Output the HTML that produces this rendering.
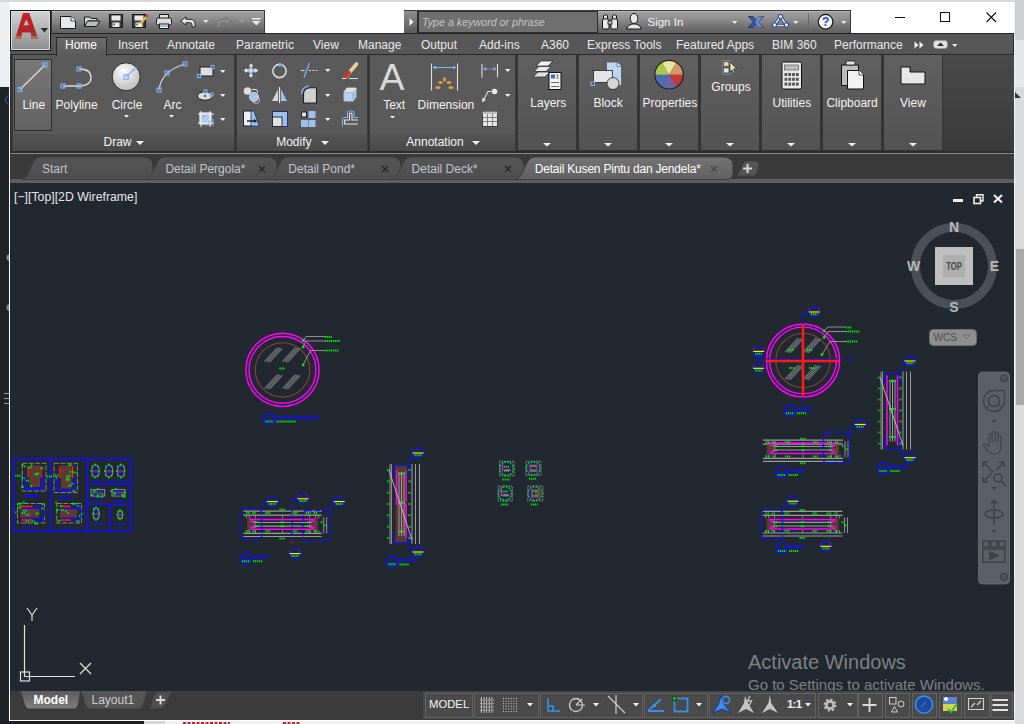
<!DOCTYPE html><html><head><meta charset='utf-8'><style>
*{margin:0;padding:0;box-sizing:border-box}
html,body{width:1024px;height:724px;overflow:hidden;background:#c9cacb;font-family:"Liberation Sans",sans-serif;position:relative}
.a{position:absolute}
.t{position:absolute;white-space:nowrap;line-height:1}
</style></head><body><div class="a" style="left:0px;top:0px;width:1024px;height:724px;background:#cbcccd"></div><div class="a" style="left:0px;top:0px;width:1024px;height:2px;background:#d8d9da"></div><div class="a" style="left:0px;top:2px;width:9px;height:85px;background:#eceef0"></div><div class="a" style="left:0px;top:87px;width:9px;height:637px;background:#1f2327"></div><div class="a" style="left:1015px;top:0px;width:9px;height:724px;background:#cdcecf"></div><div class="a" style="left:9px;top:2px;width:1006px;height:719px;background:#ffffff"></div><div class="a" style="left:51px;top:10px;width:214px;height:24px;background:linear-gradient(#b6b6b6 0,#b6b6b6 1px,#a0a0a0 1px,#8e8e8e 35%,#747474 65%,#5c5c5c 100%);border:1px solid #3a3a3a;border-bottom:none"></div><div class="a" style="left:404px;top:10px;width:447px;height:24px;background:linear-gradient(#b6b6b6 0,#b6b6b6 1px,#a0a0a0 1px,#8e8e8e 35%,#747474 65%,#5c5c5c 100%);border:1px solid #3a3a3a;border-bottom:none"></div><svg class="a" style="left:60px;top:16px;overflow:visible;" width="17" height="14" viewBox="0 0 17 14"><path d="M0.5,0.5 H11 L15.5,5 V12.5 H0.5 Z" fill="#e6e7e8" stroke="#1a1a1a"/><path d="M11,0.5 V5 H15.5" fill="#fff" stroke="#1a1a1a" stroke-width="0.8"/></svg><svg class="a" style="left:84px;top:16px;overflow:visible;" width="17" height="12" viewBox="0 0 17 12"><path d="M0.5,1 H6 L7,2.5 H13 V5 H4 L0.5,10.5 Z" fill="#d8d9da" stroke="#1a1a1a"/><path d="M3.5,5 H16 L12.5,10.5 H0.5 Z" fill="#b9bcbd" stroke="#1a1a1a"/></svg><svg class="a" style="left:109px;top:14px;overflow:visible;" width="15" height="14" viewBox="0 0 15 14"><rect x="0.5" y="0.5" width="13" height="13" fill="#3a3a3a" stroke="#1a1a1a"/><rect x="2.5" y="1.5" width="9" height="5" fill="#e8e8e8"/><rect x="3.5" y="8.5" width="7" height="4.5" fill="#f0f0f0"/><rect x="4.5" y="9.5" width="1.2" height="2" fill="#222"/></svg><svg class="a" style="left:132px;top:14px;overflow:visible;" width="17" height="14" viewBox="0 0 17 14"><rect x="0.5" y="0.5" width="13" height="13" fill="#3a3a3a" stroke="#1a1a1a"/><rect x="2.5" y="1.5" width="9" height="5" fill="#e8e8e8"/><rect x="3.5" y="8.5" width="7" height="4.5" fill="#f0f0f0"/><rect x="4.5" y="9.5" width="1.2" height="2" fill="#222"/><path d="M8,10 L15,2" stroke="#e8c040" stroke-width="2.5"/><path d="M14,3 L16,1" stroke="#d04030" stroke-width="2.5"/></svg><svg class="a" style="left:156px;top:14px;overflow:visible;" width="16" height="15" viewBox="0 0 16 15"><rect x="3.5" y="0.5" width="9" height="4" fill="#e0e0e0" stroke="#1a1a1a"/><rect x="0.5" y="4" width="15" height="7" rx="1.5" fill="#dcdcdc" stroke="#1a1a1a"/><rect x="3.5" y="10" width="9" height="4.5" fill="#f0f0f0" stroke="#1a1a1a"/><rect x="4" y="11.5" width="8" height="1.2" fill="#6aa8e8"/></svg><svg class="a" style="left:180px;top:16px;overflow:visible;" width="16" height="12" viewBox="0 0 16 12"><path d="M0.8,5 L6,0.8 V3.3 H10 Q15,3.3 15,8 V11 H12 V8.5 Q12,6.7 10,6.7 H6 V9.2 Z" fill="#e4e4e4" stroke="#1a1a1a" stroke-width="0.9"/></svg><svg class="a" style="left:203px;top:20px" width="5.5" height="3"><polygon points="0,0 5.5,0 2.75,3" fill="#e8e8e8"/></svg><svg class="a" style="left:217px;top:16px;overflow:visible;" width="15" height="12" viewBox="0 0 15 12"><path d="M14.2,5 L9,0.8 V3.3 H5 Q0,3.3 0,8 V11 H3 V8.5 Q3,6.7 5,6.7 H9 V9.2 Z" fill="#8e8e8e" stroke="#707070" stroke-width="0.9"/></svg><svg class="a" style="left:239px;top:20px" width="5.5" height="3"><polygon points="0,0 5.5,0 2.75,3" fill="#a0a0a0"/></svg><svg class="a" style="left:252px;top:18px;overflow:visible;" width="9" height="8" viewBox="0 0 9 8"><rect x="0" y="0" width="8.5" height="1.6" fill="#e8e8e8"/><polygon points="0,3 8.5,3 4.25,7.5" fill="#e8e8e8"/></svg><div class="a" style="left:404px;top:11px;width:14px;height:22px;background:linear-gradient(#8e8e8e,#5a5a5a);border-right:1px solid #2a2a2a"></div><svg class="a" style="left:409px;top:18px;overflow:visible;" width="5" height="8" viewBox="0 0 5 8"><polygon points="0.5,0 4.5,4 0.5,8" fill="#f4f4f4"/></svg><div class="a" style="left:418px;top:11px;width:180px;height:22px;background:#6f6f6f;border:1px solid #2e2e2e"></div><div class="t" style="left:422px;top:16.94px;font-size:10.7px;color:#c4c4c4;font-weight:400;font-style:italic;">Type a keyword or phrase</div><svg class="a" style="left:602px;top:14px;overflow:visible;" width="17" height="16" viewBox="0 0 17 16"><rect x="1.5" y="1" width="4" height="5" rx="1" fill="#dcdcdc" stroke="#151515"/><rect x="10.5" y="1" width="4" height="5" rx="1" fill="#dcdcdc" stroke="#151515"/><rect x="0.5" y="5" width="6.5" height="10" rx="1" fill="#e8e8e8" stroke="#151515"/><rect x="9" y="5" width="6.5" height="10" rx="1" fill="#e8e8e8" stroke="#151515"/><rect x="6" y="7" width="4" height="3" fill="#cfcfcf" stroke="#151515" stroke-width="0.8"/></svg><svg class="a" style="left:626px;top:13px;overflow:visible;" width="17" height="17" viewBox="0 0 17 17"><ellipse cx="8" cy="5.5" rx="3.8" ry="5" fill="#e6e6e6" stroke="#151515"/><path d="M0.5,16 Q2,11.5 6,11 H10 Q14,11.5 15.5,16 Z" fill="#e6e6e6" stroke="#151515"/></svg><div class="t" style="left:647.5px;top:16.77px;font-size:11.5px;color:#f4f4f4;font-weight:400;font-style:normal;">Sign In</div><svg class="a" style="left:732px;top:21px" width="5.5" height="3"><polygon points="0,0 5.5,0 2.75,3" fill="#e8e8e8"/></svg><svg class="a" style="left:748px;top:16px;overflow:visible;" width="16" height="12" viewBox="0 0 16 12"><path d="M0.5,0.5 H5 L8,4 L11,0.5 H15.5 L10.5,6 L15.5,11.5 H11 L8,8 L5,11.5 H0.5 L5.5,6 Z" fill="#3c5ca8" stroke="#1c2c60" stroke-width="0.8"/><path d="M8,4 L11,0.5 H15 L10.5,6 L15,11.5 H11 L8,8" fill="#6c8ad0"/></svg><svg class="a" style="left:772px;top:14px;overflow:visible;" width="17" height="14" viewBox="0 0 17 14"><path d="M8.5,2 L2.5,11.5 H14.5 Z" fill="none" stroke="#223a80" stroke-width="3.2" stroke-linejoin="round"/><path d="M8.5,2 L2.5,11.5 H14.5 Z" fill="none" stroke="#dfe4f0" stroke-width="1.5" stroke-linejoin="round"/><circle cx="8.5" cy="2.6" r="2.2" fill="#dfe4f0" stroke="#223a80"/><circle cx="2.6" cy="11" r="2.2" fill="#dfe4f0" stroke="#223a80"/><circle cx="14.4" cy="11" r="2.2" fill="#dfe4f0" stroke="#223a80"/></svg><svg class="a" style="left:793px;top:21px" width="5.5" height="3"><polygon points="0,0 5.5,0 2.75,3" fill="#e8e8e8"/></svg><div class="a" style="left:808px;top:13px;width:1px;height:18px;background:#6a6a6a"></div><svg class="a" style="left:817px;top:14px;overflow:visible;" width="18" height="17" viewBox="0 0 18 17"><circle cx="8.6" cy="7.7" r="7.3" fill="#f2f2f2" stroke="#111" stroke-width="1.1"/><text x="8.6" y="12.2" font-family="Liberation Sans" font-weight="700" font-size="12.5" fill="#1f4fb8" text-anchor="middle">?</text></svg><svg class="a" style="left:841px;top:21px" width="5.5" height="3"><polygon points="0,0 5.5,0 2.75,3" fill="#e8e8e8"/></svg><div class="a" style="left:895px;top:17px;width:10px;height:1px;background:#111"></div><div class="a" style="left:940px;top:12px;width:10px;height:10px;border:1px solid #111"></div><svg class="a" style="left:986px;top:12px;overflow:visible;" width="11" height="11" viewBox="0 0 11 11"><path d="M0.5,0.5 L10,10 M10,0.5 L0.5,10" stroke="#111" stroke-width="1.1"/></svg><div class="a" style="left:10px;top:33px;width:1004px;height:22px;background:#575757;border-top:1px solid #252525;border-bottom:1px solid #2a2a2a;border-right:1px solid #2a2a2a"></div><div class="t" style="left:118px;top:38.84px;font-size:12px;color:#e8e8e8;font-weight:400;font-style:normal;">Insert</div><div class="t" style="left:167px;top:38.84px;font-size:12px;color:#e8e8e8;font-weight:400;font-style:normal;">Annotate</div><div class="t" style="left:236px;top:38.84px;font-size:12px;color:#e8e8e8;font-weight:400;font-style:normal;">Parametric</div><div class="t" style="left:313px;top:38.84px;font-size:12px;color:#e8e8e8;font-weight:400;font-style:normal;">View</div><div class="t" style="left:358px;top:38.84px;font-size:12px;color:#e8e8e8;font-weight:400;font-style:normal;">Manage</div><div class="t" style="left:421px;top:38.84px;font-size:12px;color:#e8e8e8;font-weight:400;font-style:normal;">Output</div><div class="t" style="left:479px;top:38.84px;font-size:12px;color:#e8e8e8;font-weight:400;font-style:normal;">Add-ins</div><div class="t" style="left:541px;top:38.84px;font-size:12px;color:#e8e8e8;font-weight:400;font-style:normal;">A360</div><div class="t" style="left:587px;top:38.84px;font-size:12px;color:#e8e8e8;font-weight:400;font-style:normal;">Express Tools</div><div class="t" style="left:676px;top:38.84px;font-size:12px;color:#e8e8e8;font-weight:400;font-style:normal;">Featured Apps</div><div class="t" style="left:772px;top:38.84px;font-size:12px;color:#e8e8e8;font-weight:400;font-style:normal;">BIM 360</div><div class="t" style="left:834px;top:38.84px;font-size:12px;color:#e8e8e8;font-weight:400;font-style:normal;">Performance</div><svg class="a" style="left:914px;top:41px;overflow:visible;" width="10" height="8" viewBox="0 0 10 8"><polygon points="0.5,0.5 4.5,4 0.5,7.5" fill="#f0f0f0"/><polygon points="5.5,0.5 9.5,4 5.5,7.5" fill="#f0f0f0"/></svg><svg class="a" style="left:933px;top:40px;overflow:visible;" width="15" height="9" viewBox="0 0 15 9"><rect x="0.5" y="0.5" width="14" height="8" rx="3" fill="#e0e0e0" stroke="#999" stroke-width="0.6"/><polygon points="4,6 11,6 7.5,2.5" fill="#2a2a2a"/></svg><svg class="a" style="left:952px;top:44px" width="5.5" height="3"><polygon points="0,0 5.5,0 2.75,3" fill="#e8e8e8"/></svg><div class="a" style="left:10px;top:55px;width:1004px;height:98px;background:#333333"></div><div class="a" style="left:12px;top:55px;width:223px;height:97px;background:#5a5a5a;border:1px solid #3c3c3c;border-top:none"></div><div class="a" style="left:13px;top:134px;width:221px;height:17px;background:linear-gradient(#545454,#4a4a4a)"></div><div class="a" style="left:56px;top:37px;width:51px;height:19px;background:linear-gradient(#6c6c6c,#5a5a5a);border:1px solid #2a2a2a;border-bottom:none"></div><div class="t" style="left:65px;top:38.84px;font-size:12px;color:#ffffff;font-weight:400;font-style:normal;">Home</div><div class="a" style="left:236px;top:55px;width:132px;height:97px;background:#5a5a5a;border:1px solid #3c3c3c;border-top:none"></div><div class="a" style="left:237px;top:134px;width:130px;height:17px;background:linear-gradient(#545454,#4a4a4a)"></div><div class="a" style="left:369px;top:55px;width:147px;height:97px;background:#5a5a5a;border:1px solid #3c3c3c;border-top:none"></div><div class="a" style="left:370px;top:134px;width:145px;height:17px;background:linear-gradient(#545454,#4a4a4a)"></div><div class="a" style="left:517px;top:55px;width:60px;height:96px;background:linear-gradient(#606060,#535353);border:1px solid #353535;border-top:none"></div><div class="a" style="left:578px;top:55px;width:60px;height:96px;background:linear-gradient(#606060,#535353);border:1px solid #353535;border-top:none"></div><div class="a" style="left:639px;top:55px;width:60px;height:96px;background:linear-gradient(#606060,#535353);border:1px solid #353535;border-top:none"></div><div class="a" style="left:700px;top:55px;width:60px;height:96px;background:linear-gradient(#606060,#535353);border:1px solid #353535;border-top:none"></div><div class="a" style="left:761px;top:55px;width:60px;height:96px;background:linear-gradient(#606060,#535353);border:1px solid #353535;border-top:none"></div><div class="a" style="left:822px;top:55px;width:60px;height:96px;background:linear-gradient(#606060,#535353);border:1px solid #353535;border-top:none"></div><div class="a" style="left:883px;top:55px;width:60px;height:96px;background:linear-gradient(#606060,#535353);border:1px solid #353535;border-top:none"></div><div class="a" style="left:943px;top:55px;width:71px;height:96px;background:linear-gradient(#4a4a4a,#3a3a3a)"></div><div class="a" style="left:10px;top:151px;width:1004px;height:2px;background:#2c2c2c"></div><div class="a" style="left:10px;top:153px;width:1004px;height:1px;background:#8a8a8a"></div><div class="a" style="left:14px;top:59px;width:38px;height:72px;background:linear-gradient(#787878,#626262);border:1px solid #2e2e2e"></div><svg class="a" style="left:0px;top:0px;overflow:visible;" width="1" height="1" viewBox="0 0 1 1"><line x1="20" y1="89.5" x2="45" y2="65" stroke="#dcdcdc" stroke-width="1.3"/><rect x="18.0" y="87.5" width="4" height="4" fill="none" stroke="#7cb0f2" stroke-width="1.2"/><rect x="43.0" y="63.0" width="4" height="4" fill="none" stroke="#7cb0f2" stroke-width="1.2"/><path d="M63,86 H79 M79,69 Q91,69 91,77.5 Q91,86 79,86" fill="none" stroke="#dcdcdc" stroke-width="1.3"/><rect x="61.0" y="84.0" width="4" height="4" fill="none" stroke="#7cb0f2" stroke-width="1.2"/><rect x="77.0" y="84.0" width="4" height="4" fill="none" stroke="#7cb0f2" stroke-width="1.2"/><rect x="77.0" y="67.0" width="4" height="4" fill="none" stroke="#7cb0f2" stroke-width="1.2"/><defs><radialGradient id="cg" cx="0.4" cy="0.3" r="0.8"><stop offset="0" stop-color="#fbfbfb"/><stop offset="1" stop-color="#b4b4b4"/></radialGradient></defs><circle cx="126.2" cy="76.8" r="14" fill="url(#cg)" stroke="#2a2a2a" stroke-width="1"/><line x1="126" y1="77" x2="136.5" y2="67" stroke="#7cb0f2" stroke-width="1.2"/><rect x="123.95" y="74.75" width="4.5" height="4.5" fill="none" stroke="#7cb0f2" stroke-width="1.2"/><path d="M159,90 Q161,71 185,64" fill="none" stroke="#d0d0d0" stroke-width="1.3"/><rect x="157.0" y="88.0" width="4" height="4" fill="none" stroke="#7cb0f2" stroke-width="1.2"/><rect x="165.0" y="71.0" width="4" height="4" fill="none" stroke="#7cb0f2" stroke-width="1.2"/><rect x="183.0" y="62.0" width="4" height="4" fill="none" stroke="#7cb0f2" stroke-width="1.2"/><rect x="200" y="67" width="13" height="9" fill="#dedede" stroke="#1e1e1e"/><rect x="211.0" y="65.5" width="3" height="3" fill="none" stroke="#7cb0f2" stroke-width="1.2"/><rect x="197.5" y="74.5" width="3" height="3" fill="none" stroke="#7cb0f2" stroke-width="1.2"/><ellipse cx="205" cy="96" rx="7.5" ry="4.2" fill="#dcdcdc" stroke="#1e1e1e"/><circle cx="205" cy="96" r="0.9" fill="#111"/><rect x="204.0" y="90.0" width="3" height="3" fill="none" stroke="#7cb0f2" stroke-width="1.2"/><rect x="210.0" y="93.0" width="3" height="3" fill="none" stroke="#7cb0f2" stroke-width="1.2"/><rect x="200" y="113" width="11" height="11" fill="#a8c4ea" stroke="#f0f0f0" stroke-width="1.2"/><path d="M198,114 H214 M198,123 H214 M201,111 V127 M210,111 V127" stroke="#f0f0f0" stroke-width="1"/><path d="M202,122 L209,115 M204,124 L211,117" stroke="#e8e8e8" stroke-width="0.8"/><path d="M206,126 L213,119 L213,126" fill="none" stroke="#7cb0f2" stroke-width="1"/></svg><div class="t" style="left:22.4px;top:98.84px;font-size:12px;color:#f4f4f4;font-weight:400;font-style:normal;">Line</div><div class="t" style="left:55.6px;top:98.84px;font-size:12px;color:#f4f4f4;font-weight:400;font-style:normal;">Polyline</div><div class="t" style="left:111.7px;top:98.84px;font-size:12px;color:#f4f4f4;font-weight:400;font-style:normal;">Circle</div><div class="t" style="left:163.5px;top:98.84px;font-size:12px;color:#f4f4f4;font-weight:400;font-style:normal;">Arc</div><svg class="a" style="left:123.5px;top:115px" width="5" height="2.8"><polygon points="0,0 5,0 2.5,2.8" fill="#f0f0f0"/></svg><svg class="a" style="left:169px;top:115px" width="5" height="2.8"><polygon points="0,0 5,0 2.5,2.8" fill="#f0f0f0"/></svg><svg class="a" style="left:220px;top:70px" width="5.5" height="3"><polygon points="0,0 5.5,0 2.75,3" fill="#f0f0f0"/></svg><svg class="a" style="left:220px;top:94px" width="5.5" height="3"><polygon points="0,0 5.5,0 2.75,3" fill="#f0f0f0"/></svg><svg class="a" style="left:220px;top:118px" width="5.5" height="3"><polygon points="0,0 5.5,0 2.75,3" fill="#f0f0f0"/></svg><div class="t" style="left:103.5px;top:136.34px;font-size:12px;color:#f4f4f4;font-weight:400;font-style:normal;">Draw</div><svg class="a" style="left:136px;top:141px" width="8" height="4"><polygon points="0,0 8,0 4.0,4" fill="#f0f0f0"/></svg><svg class="a" style="left:0px;top:0px;overflow:visible;" width="1" height="1" viewBox="0 0 1 1"><path d="M251,63 L254,66.5 H252.2 V69 H255 V67.2 L258.5,70.5 L255,73.8 V72 H252.2 V74.8 H254 L251,78 L248,74.8 H249.8 V72 H247 V73.8 L243.5,70.5 L247,67.2 V69 H249.8 V66.5 H248 Z" fill="#e0e0e0" stroke="#333" stroke-width="0.4"/><rect x="249" y="68.5" width="4" height="4" fill="none" stroke="#7cb0f2" stroke-width="1"/><circle cx="279.5" cy="71" r="6.6" fill="none" stroke="#d8d8d8" stroke-width="1.6"/><polygon points="279,62.5 284,64.8 279,67" fill="#7cb0f2"/><path d="M301,70.5 H304.5 M309,70.5 H311 M312.5,70.5 H314.5 M316,70.5 H317.5" stroke="#dcdcdc" stroke-width="1.2"/><line x1="304" y1="77.5" x2="309.5" y2="63" stroke="#7cb0f2" stroke-width="1.3"/><path d="M346,76.5 L356.5,64" stroke="#e8d0a0" stroke-width="3.6" stroke-linecap="round"/><path d="M345,77 L349,72.5" stroke="#d03030" stroke-width="3.6" stroke-linecap="round"/><path d="M342,78.5 H346 M349,78.5 H358" stroke="#e0e0e0" stroke-width="1.2"/><circle cx="247.5" cy="91" r="3.8" fill="#dcdcdc"/><circle cx="254" cy="97" r="4.5" fill="#9cc0ec" stroke="#e8e8e8" stroke-width="0.8"/><circle cx="256" cy="100" r="3.5" fill="none" stroke="#cfcfcf" stroke-width="0.8"/><path d="M252,89.5 H256 Q257.5,89.5 257.5,91.5 V93" fill="none" stroke="#e0e0e0" stroke-width="1"/><path d="M279.5,87 V103" stroke="#e8e8e8" stroke-width="1.2"/><polygon points="278,89.5 278,101 272,101" fill="#d8d8d8"/><polygon points="281,89.5 281,101 287,101" fill="#9cc0ec"/><path d="M303.5,103 V94 Q303.5,88.5 310,87.8 H316.5 V103 Z" fill="#d0d0d0" stroke="#1e1e1e" stroke-width="1.1"/><path d="M301.5,94 Q302,87 309,86" fill="none" stroke="#7cb0f2" stroke-width="1.4"/><path d="M344,92 L347,88 H356 V97 L353,101 H344 Z" fill="#9cc0ec" stroke="#e0e0e0" stroke-width="0.8"/><path d="M347,88 H356 L353,92 H344 Z" fill="#e0e0e0"/><rect x="345" y="93" width="7" height="7" fill="#b8d2f2"/><rect x="243.5" y="111" width="8" height="15" fill="#f0f0f0" stroke="#1e1e1e"/><polygon points="251,111 254,111 259,126 251,126" fill="#9cc0ec" stroke="#1e2c60" stroke-width="0.8"/><path d="M247,121 H254.5" stroke="#111" stroke-width="1.4"/><polygon points="254,119 257,121 254,123" fill="#111"/><rect x="272.5" y="111.5" width="15" height="15" fill="#9cc0ec" stroke="#1e2c60" stroke-width="0.9"/><rect x="272.5" y="117" width="9.5" height="9.5" fill="#e2e2e2" stroke="#1e1e1e" stroke-width="0.9"/><rect x="301.5" y="112" width="5" height="5" fill="#e2e2e2" stroke="#1e1e1e"/><rect x="308.5" y="111" width="7" height="7" fill="#9cc0ec"/><rect x="301" y="120" width="7" height="7" fill="#9cc0ec"/><rect x="308.5" y="120" width="7" height="7" fill="#9cc0ec"/><path d="M342.5,126 V119 Q342.5,117.5 344,117.5 H347.5 V113 Q347.5,111 350,111 H352 Q354,111 354,113 V117.5 H358" fill="none" stroke="#7cb0f2" stroke-width="1.1"/><path d="M344.5,124 V120 H349.5 V114.5 Q349.5,113 350.5,113 H351 Q352,113 352,114.5 V120 H358 M344.5,124 H358" fill="none" stroke="#e8e8e8" stroke-width="1.1"/></svg><svg class="a" style="left:324.5px;top:69px" width="5.5" height="3"><polygon points="0,0 5.5,0 2.75,3" fill="#f0f0f0"/></svg><svg class="a" style="left:324.5px;top:94px" width="5.5" height="3"><polygon points="0,0 5.5,0 2.75,3" fill="#f0f0f0"/></svg><svg class="a" style="left:324.5px;top:118px" width="5.5" height="3"><polygon points="0,0 5.5,0 2.75,3" fill="#f0f0f0"/></svg><div class="t" style="left:276.2px;top:136.34px;font-size:12px;color:#f4f4f4;font-weight:400;font-style:normal;">Modify</div><svg class="a" style="left:320.5px;top:141px" width="8" height="4"><polygon points="0,0 8,0 4.0,4" fill="#f0f0f0"/></svg><div class="t" style="left:379.5px;top:59.46px;font-size:37.5px;color:#d8d8d8;font-weight:400;font-style:normal;">A</div><svg class="a" style="left:0px;top:0px;overflow:visible;" width="1" height="1" viewBox="0 0 1 1"><path d="M431.5,63.5 V90.5 M457.5,63.5 V90.5" stroke="#dcdcdc" stroke-width="1.1"/><path d="M433,67.5 H456" stroke="#7cb0f2" stroke-width="1.1"/><polygon points="432.5,67.5 436,65.5 436,69.5" fill="#7cb0f2"/><polygon points="456.5,67.5 453,65.5 453,69.5" fill="#7cb0f2"/><g fill="#e0a040"><ellipse cx="438" cy="87.5" rx="2.6" ry="1.5"/><ellipse cx="440.5" cy="82.5" rx="2.2" ry="1.6"/><ellipse cx="444.5" cy="79.5" rx="1.5" ry="2.3"/><ellipse cx="449" cy="82.5" rx="2.2" ry="1.6"/><ellipse cx="451" cy="87.5" rx="2.6" ry="1.5"/></g><path d="M482,64 V77.5 M497.5,64 V77.5" stroke="#e0e0e0" stroke-width="1.1"/><path d="M484,69 H495.5" stroke="#7cb0f2" stroke-width="1.1" stroke-dasharray="1.5,1"/><polygon points="483,69 486,67 486,71" fill="#7cb0f2"/><polygon points="496.5,69 493.5,67 493.5,71" fill="#7cb0f2"/><circle cx="494.5" cy="91.5" r="3.3" fill="#e8e8e8" stroke="#333" stroke-width="0.6"/><path d="M491,91.5 H488 L483,101" fill="none" stroke="#e0e0e0" stroke-width="1.1"/><polygon points="482,102.5 482.5,97.5 486,100" fill="#e0e0e0"/><rect x="482.5" y="111.5" width="15" height="15" fill="#e8e8e8" stroke="#222" stroke-width="0.8"/><rect x="482.5" y="111.5" width="15" height="2.5" fill="#bdbdbd"/><path d="M482.5,117.5 H497.5 M482.5,121.5 H497.5 M487.5,114 V126.5 M492.5,114 V126.5" stroke="#666" stroke-width="0.8"/></svg><div class="t" style="left:383.2px;top:98.54px;font-size:12px;color:#f4f4f4;font-weight:400;font-style:normal;">Text</div><svg class="a" style="left:390px;top:115.5px" width="5" height="2.8"><polygon points="0,0 5,0 2.5,2.8" fill="#f0f0f0"/></svg><div class="t" style="left:417.6px;top:98.54px;font-size:12px;color:#f4f4f4;font-weight:400;font-style:normal;">Dimension</div><svg class="a" style="left:505px;top:69px" width="5.5" height="3"><polygon points="0,0 5.5,0 2.75,3" fill="#f0f0f0"/></svg><svg class="a" style="left:505px;top:94px" width="5.5" height="3"><polygon points="0,0 5.5,0 2.75,3" fill="#f0f0f0"/></svg><div class="t" style="left:406.3px;top:136.34px;font-size:12px;color:#f4f4f4;font-weight:400;font-style:normal;">Annotation</div><svg class="a" style="left:472.3px;top:141px" width="8" height="4"><polygon points="0,0 8,0 4.0,4" fill="#f0f0f0"/></svg><svg class="a" style="left:0px;top:0px;overflow:visible;" width="1" height="1" viewBox="0 0 1 1"><g stroke="#222" stroke-width="0.7"><polygon points="541,61 553,61 548,66 536,66" fill="#f0f0f0"/><polygon points="539,66.5 551,66.5 546,71.5 534,71.5" fill="#e8e8e8"/><polygon points="538,72 550,72 545,77 533,77" fill="#e0e0e0"/></g><rect x="549" y="72.5" width="12" height="17" fill="#f4f4f4" stroke="#111" stroke-width="1"/><rect x="551" y="74.5" width="4" height="4" fill="#3c6cc0"/><path d="M551,82.5 H559 M551,86.5 H559" stroke="#555" stroke-width="0.9"/><rect x="556.5" y="74" width="2" height="5" fill="#999"/><path d="M606.5,62 H617 L621.5,66.5 V85.5 H606.5 Z" fill="#bcd6f2" stroke="#555" stroke-width="0.8"/><path d="M617,62 V66.5 H621.5" fill="#e8f0f8" stroke="#555" stroke-width="0.7"/><rect x="593.5" y="70.5" width="19" height="12" fill="#e4e4e4" stroke="#222" stroke-width="0.8"/><circle cx="613" cy="83.5" r="6" fill="#d4d4d4" stroke="#222" stroke-width="0.8"/><rect x="591" y="82" width="3.5" height="3.5" fill="none" stroke="#7cb0f2" stroke-width="1"/><g transform="translate(669.1,74.7)"><path d="M0,0 L-7.25,-12.56 A14.5,14.5 0 0 1 7.25,-12.56Z" fill="#eae2a0"/><path d="M0,0 L7.25,-12.56 A14.5,14.5 0 0 1 14.5,0Z" fill="#d09868"/><path d="M0,0 L14.5,0 A14.5,14.5 0 0 1 7.25,12.56Z" fill="#c43a34"/><path d="M0,0 L7.25,12.56 A14.5,14.5 0 0 1 -7.25,12.56Z" fill="#6a66a8"/><path d="M0,0 L-7.25,12.56 A14.5,14.5 0 0 1 -14.5,0Z" fill="#4a6cb0"/><path d="M0,0 L-14.5,0 A14.5,14.5 0 0 1 -7.25,-12.56Z" fill="#a8c84c"/><circle r="14.3" fill="none" stroke="#222" stroke-width="1.2"/></g><rect x="722.5" y="60.5" width="8" height="14" fill="none" stroke="#7cb0f2" stroke-width="0.8" stroke-dasharray="1,1"/><rect x="724" y="62" width="4.5" height="4" fill="#f0d090"/><rect x="724" y="68.5" width="4.5" height="4" fill="#e8e8e8"/><polygon points="730,62 736.5,68.5 733.5,69 735,73 733.5,73.5 732,70 730,72" fill="#f0e0a0" stroke="#1e2c60" stroke-width="0.7"/><rect x="782" y="62" width="19.5" height="27" rx="1.5" fill="#e8e8e8" stroke="#111" stroke-width="1"/><rect x="784.5" y="65" width="14" height="5" fill="#bcbcbc" stroke="#444" stroke-width="0.6"/><rect x="784.5" y="73.0" width="2.8" height="3" fill="#555"/><rect x="788.3" y="73.0" width="2.8" height="3" fill="#555"/><rect x="792.1" y="73.0" width="2.8" height="3" fill="#555"/><rect x="795.9" y="73.0" width="2.8" height="3" fill="#555"/><rect x="784.5" y="77.8" width="2.8" height="3" fill="#555"/><rect x="788.3" y="77.8" width="2.8" height="3" fill="#555"/><rect x="792.1" y="77.8" width="2.8" height="3" fill="#555"/><rect x="795.9" y="77.8" width="2.8" height="3" fill="#555"/><rect x="784.5" y="82.6" width="2.8" height="3" fill="#555"/><rect x="788.3" y="82.6" width="2.8" height="3" fill="#555"/><rect x="792.1" y="82.6" width="2.8" height="3" fill="#555"/><rect x="795.9" y="82.6" width="2.8" height="3" fill="#555"/><path d="M841.5,65 H858.5 V85.5 H841.5 Z" fill="#bdbdbd" stroke="#111" stroke-width="1"/><rect x="846" y="61" width="9" height="4" rx="1.5" fill="#e0e0e0" stroke="#111" stroke-width="0.8"/><path d="M847.5,70.5 H859 L863.5,75 V89 H847.5 Z" fill="#f2f2f2" stroke="#111" stroke-width="1"/><path d="M859,70.5 V75 H863.5" fill="#fff" stroke="#111" stroke-width="0.7"/><path d="M901,67 H910 V72 H925 V84 H901 Z" fill="#e6e6e6" stroke="#111" stroke-width="1"/></svg><div class="t" style="left:530.3px;top:96.64px;font-size:12px;color:#f4f4f4;font-weight:400;font-style:normal;">Layers</div><div class="t" style="left:593.4px;top:96.64px;font-size:12px;color:#f4f4f4;font-weight:400;font-style:normal;">Block</div><div class="t" style="left:642.6px;top:96.64px;font-size:12px;color:#f4f4f4;font-weight:400;font-style:normal;">Properties</div><div class="t" style="left:711.3px;top:80.84px;font-size:12px;color:#f4f4f4;font-weight:400;font-style:normal;">Groups</div><div class="t" style="left:772.5px;top:96.64px;font-size:12px;color:#f4f4f4;font-weight:400;font-style:normal;">Utilities</div><div class="t" style="left:826.4px;top:96.64px;font-size:12px;color:#f4f4f4;font-weight:400;font-style:normal;">Clipboard</div><div class="t" style="left:900px;top:96.64px;font-size:12px;color:#f4f4f4;font-weight:400;font-style:normal;">View</div><svg class="a" style="left:543px;top:143px" width="8" height="3.5"><polygon points="0,0 8,0 4.0,3.5" fill="#f0f0f0"/></svg><svg class="a" style="left:604px;top:143px" width="8" height="3.5"><polygon points="0,0 8,0 4.0,3.5" fill="#f0f0f0"/></svg><svg class="a" style="left:665px;top:143px" width="8" height="3.5"><polygon points="0,0 8,0 4.0,3.5" fill="#f0f0f0"/></svg><svg class="a" style="left:726px;top:143px" width="8" height="3.5"><polygon points="0,0 8,0 4.0,3.5" fill="#f0f0f0"/></svg><svg class="a" style="left:787px;top:143px" width="8" height="3.5"><polygon points="0,0 8,0 4.0,3.5" fill="#f0f0f0"/></svg><svg class="a" style="left:848px;top:143px" width="8" height="3.5"><polygon points="0,0 8,0 4.0,3.5" fill="#f0f0f0"/></svg><svg class="a" style="left:909px;top:143px" width="8" height="3.5"><polygon points="0,0 8,0 4.0,3.5" fill="#f0f0f0"/></svg><div class="a" style="left:10px;top:154px;width:1004px;height:25px;background:#3a3a3a"></div><div class="a" style="left:10px;top:179px;width:1004px;height:4px;background:#5e5e5e"></div><svg class="a" style="left:0px;top:0px;overflow:visible;" width="1" height="1" viewBox="0 0 1 1"><defs><linearGradient id="tg" x1="0" y1="0" x2="0" y2="1"><stop offset="0" stop-color="#555"/><stop offset="1" stop-color="#4e4e4e"/></linearGradient><linearGradient id="tga" x1="0" y1="0" x2="0" y2="1"><stop offset="0" stop-color="#747474"/><stop offset="1" stop-color="#606060"/></linearGradient></defs><path d="M21,179.5 C30,179.5 31,157 40,157 L143,157 Q153,157 153,166 L153,173.5 Q153,179.5 145,179.5 Z" fill="url(#tg)" stroke="#3a3a3a" stroke-width="0.8"/><path d="M145,179.5 C154,179.5 155,157 164,157 L267,157 Q277,157 277,166 L277,173.5 Q277,179.5 269,179.5 Z" fill="url(#tg)" stroke="#3a3a3a" stroke-width="0.8"/><path d="M268,179.5 C277,179.5 278,157 287,157 L391,157 Q401,157 401,166 L401,173.5 Q401,179.5 393,179.5 Z" fill="url(#tg)" stroke="#3a3a3a" stroke-width="0.8"/><path d="M391,179.5 C400,179.5 401,157 410,157 L514,157 Q524,157 524,166 L524,173.5 Q524,179.5 516,179.5 Z" fill="url(#tg)" stroke="#3a3a3a" stroke-width="0.8"/><path d="M515,179.5 C524,179.5 525,157 534,157 L723,157 Q733,157 733,166 L733,173.5 Q733,179.5 725,179.5 Z" fill="url(#tga)" stroke="#3a3a3a" stroke-width="0.8"/><path d="M736,175.5 C741,175.5 741,161.5 747,161.5 L755,161.5 Q759,161.5 758.5,165 L757,171 Q756,175.5 751,175.5 Z" fill="#555"/></svg><div class="t" style="left:42px;top:162.84px;font-size:12px;color:#c4c4cc;font-weight:400;font-style:normal;">Start</div><div class="t" style="left:165.4px;top:162.84px;font-size:12px;color:#c4c4cc;font-weight:400;font-style:normal;">Detail Pergola*</div><svg class="a" style="left:258px;top:165px;overflow:visible;" width="8" height="8" viewBox="0 0 8 8"><path d="M1,1 L7,7 M7,1 L1,7" stroke="#2a2a2a" stroke-width="1.5"/></svg><div class="t" style="left:288.3px;top:162.84px;font-size:12px;color:#c4c4cc;font-weight:400;font-style:normal;">Detail Pond*</div><svg class="a" style="left:381px;top:165px;overflow:visible;" width="8" height="8" viewBox="0 0 8 8"><path d="M1,1 L7,7 M7,1 L1,7" stroke="#2a2a2a" stroke-width="1.5"/></svg><div class="t" style="left:411.6px;top:162.84px;font-size:12px;color:#c4c4cc;font-weight:400;font-style:normal;">Detail Deck*</div><svg class="a" style="left:503.5px;top:165px;overflow:visible;" width="8" height="8" viewBox="0 0 8 8"><path d="M1,1 L7,7 M7,1 L1,7" stroke="#2a2a2a" stroke-width="1.5"/></svg><div class="t" style="left:534.7px;top:162.84px;font-size:12px;color:#ffffff;font-weight:400;font-style:normal;letter-spacing:-0.2px">Detail Kusen Pintu dan Jendela*</div><svg class="a" style="left:710px;top:165px;overflow:visible;" width="8" height="8" viewBox="0 0 8 8"><path d="M1,1 L7,7 M7,1 L1,7" stroke="#4a4a4a" stroke-width="1.5"/></svg><svg class="a" style="left:742px;top:163px;overflow:visible;" width="11" height="11" viewBox="0 0 11 11"><path d="M5.5,1 V10 M1,5.5 H10" stroke="#d8d8d8" stroke-width="2"/></svg><div class="a" style="left:10px;top:183px;width:1004px;height:508px;background:#212830"></div><div class="t" style="left:14px;top:191.09px;font-size:12.3px;color:#e6e6e6;font-weight:400;font-style:normal;">[&minus;][Top][2D Wireframe]</div><svg class="a" style="left:0;top:0" width="1024" height="724" viewBox="0 0 1024 724"><circle cx="282.5" cy="369.9" r="36.6" stroke="#ff00ff" stroke-width="1.5" fill="none" opacity="1"/><circle cx="282.5" cy="369.9" r="33.4" stroke="#ff00ff" stroke-width="1.4" fill="none" opacity="1"/><circle cx="282.5" cy="369.9" r="27.2" stroke="#80453a" stroke-width="1.1" fill="none" opacity="1"/><line x1="264.4" y1="361.38" x2="277.4" y2="347.38" stroke="#b0b0b0" stroke-width="0.7" opacity="0.9"/><line x1="265.7" y1="361.64" x2="278.7" y2="347.64" stroke="#b0b0b0" stroke-width="0.7" opacity="0.9"/><line x1="267.0" y1="361.9" x2="280.0" y2="347.9" stroke="#b0b0b0" stroke-width="0.7" opacity="0.9"/><line x1="268.3" y1="362.15999999999997" x2="281.3" y2="348.15999999999997" stroke="#b0b0b0" stroke-width="0.7" opacity="0.9"/><line x1="269.6" y1="362.41999999999996" x2="282.6" y2="348.41999999999996" stroke="#b0b0b0" stroke-width="0.7" opacity="0.9"/><line x1="282.4" y1="361.38" x2="295.4" y2="347.38" stroke="#b0b0b0" stroke-width="0.7" opacity="0.9"/><line x1="283.7" y1="361.64" x2="296.7" y2="347.64" stroke="#b0b0b0" stroke-width="0.7" opacity="0.9"/><line x1="285.0" y1="361.9" x2="298.0" y2="347.9" stroke="#b0b0b0" stroke-width="0.7" opacity="0.9"/><line x1="286.3" y1="362.15999999999997" x2="299.3" y2="348.15999999999997" stroke="#b0b0b0" stroke-width="0.7" opacity="0.9"/><line x1="287.6" y1="362.41999999999996" x2="300.6" y2="348.41999999999996" stroke="#b0b0b0" stroke-width="0.7" opacity="0.9"/><line x1="264.4" y1="388.38" x2="277.4" y2="374.38" stroke="#b0b0b0" stroke-width="0.7" opacity="0.9"/><line x1="265.7" y1="388.64" x2="278.7" y2="374.64" stroke="#b0b0b0" stroke-width="0.7" opacity="0.9"/><line x1="267.0" y1="388.9" x2="280.0" y2="374.9" stroke="#b0b0b0" stroke-width="0.7" opacity="0.9"/><line x1="268.3" y1="389.15999999999997" x2="281.3" y2="375.15999999999997" stroke="#b0b0b0" stroke-width="0.7" opacity="0.9"/><line x1="269.6" y1="389.41999999999996" x2="282.6" y2="375.41999999999996" stroke="#b0b0b0" stroke-width="0.7" opacity="0.9"/><line x1="282.4" y1="388.38" x2="295.4" y2="374.38" stroke="#b0b0b0" stroke-width="0.7" opacity="0.9"/><line x1="283.7" y1="388.64" x2="296.7" y2="374.64" stroke="#b0b0b0" stroke-width="0.7" opacity="0.9"/><line x1="285.0" y1="388.9" x2="298.0" y2="374.9" stroke="#b0b0b0" stroke-width="0.7" opacity="0.9"/><line x1="286.3" y1="389.15999999999997" x2="299.3" y2="375.15999999999997" stroke="#b0b0b0" stroke-width="0.7" opacity="0.9"/><line x1="287.6" y1="389.41999999999996" x2="300.6" y2="375.41999999999996" stroke="#b0b0b0" stroke-width="0.7" opacity="0.9"/><line x1="279.4" y1="368.5" x2="284.9" y2="368.5" stroke="#00ff00" stroke-width="2.0" stroke-dasharray="1.3,0.7" opacity="0.85"/><path d="M303.5,340.5 L306,336.5 H325" stroke="#9a9a9a" stroke-width="0.9" fill="none" opacity="1"/><path d="M303,347 L306,341 H325" stroke="#9a9a9a" stroke-width="0.9" fill="none" opacity="1"/><path d="M303,365 L310.5,350.5 H325" stroke="#9a9a9a" stroke-width="0.9" fill="none" opacity="1"/><circle cx="303.2" cy="340.5" r="1" stroke="#00ff00" stroke-width="0.8" fill="#00ff00" opacity="1"/><circle cx="303.2" cy="347" r="1" stroke="#00ff00" stroke-width="0.8" fill="#00ff00" opacity="1"/><circle cx="303.2" cy="365" r="1" stroke="#00ff00" stroke-width="0.8" fill="#00ff00" opacity="1"/><line x1="325" y1="337" x2="332" y2="337" stroke="#00ff00" stroke-width="2.0" stroke-dasharray="1.3,0.7" opacity="0.85"/><line x1="325" y1="341" x2="340" y2="341" stroke="#00ff00" stroke-width="2.0" stroke-dasharray="1.3,0.7" opacity="0.85"/><line x1="325" y1="350.5" x2="339" y2="350.5" stroke="#00ff00" stroke-width="2.0" stroke-dasharray="1.3,0.7" opacity="0.85"/><circle cx="269.3" cy="419" r="5.5" stroke="#1010ff" stroke-width="1.4" fill="none" opacity="1"/><line x1="263.8" y1="419.5" x2="274.8" y2="419.5" stroke="#1010ff" stroke-width="0.9" opacity="1"/><line x1="265.3" y1="421.5" x2="273.3" y2="421.5" stroke="#00ff00" stroke-width="2.0" stroke-dasharray="1.3,0.7" opacity="0.85"/><line x1="276.3" y1="416.7" x2="319.3" y2="416.7" stroke="#1010ff" stroke-width="2.0" stroke-dasharray="1.3,0.7" opacity="1"/><line x1="276.3" y1="418.4" x2="319.3" y2="418.4" stroke="#1010ff" stroke-width="0.8" opacity="1"/><line x1="276.3" y1="421.6" x2="296.3" y2="421.6" stroke="#00ff00" stroke-width="2.0" stroke-dasharray="1.3,0.7" opacity="0.85"/><circle cx="803" cy="360.5" r="36.6" stroke="#ff00ff" stroke-width="1.5" fill="none" opacity="1"/><circle cx="803" cy="360.5" r="33.4" stroke="#ff00ff" stroke-width="1.4" fill="none" opacity="1"/><circle cx="803" cy="360.5" r="27.2" stroke="#80453a" stroke-width="1.1" fill="none" opacity="1"/><line x1="784.9" y1="351.98" x2="797.9" y2="337.98" stroke="#b0b0b0" stroke-width="0.7" opacity="0.9"/><line x1="786.2" y1="352.24" x2="799.2" y2="338.24" stroke="#b0b0b0" stroke-width="0.7" opacity="0.9"/><line x1="787.5" y1="352.5" x2="800.5" y2="338.5" stroke="#b0b0b0" stroke-width="0.7" opacity="0.9"/><line x1="788.8" y1="352.76" x2="801.8" y2="338.76" stroke="#b0b0b0" stroke-width="0.7" opacity="0.9"/><line x1="790.1" y1="353.02" x2="803.1" y2="339.02" stroke="#b0b0b0" stroke-width="0.7" opacity="0.9"/><line x1="802.9" y1="351.98" x2="815.9" y2="337.98" stroke="#b0b0b0" stroke-width="0.7" opacity="0.9"/><line x1="804.2" y1="352.24" x2="817.2" y2="338.24" stroke="#b0b0b0" stroke-width="0.7" opacity="0.9"/><line x1="805.5" y1="352.5" x2="818.5" y2="338.5" stroke="#b0b0b0" stroke-width="0.7" opacity="0.9"/><line x1="806.8" y1="352.76" x2="819.8" y2="338.76" stroke="#b0b0b0" stroke-width="0.7" opacity="0.9"/><line x1="808.1" y1="353.02" x2="821.1" y2="339.02" stroke="#b0b0b0" stroke-width="0.7" opacity="0.9"/><line x1="784.9" y1="378.98" x2="797.9" y2="364.98" stroke="#b0b0b0" stroke-width="0.7" opacity="0.9"/><line x1="786.2" y1="379.24" x2="799.2" y2="365.24" stroke="#b0b0b0" stroke-width="0.7" opacity="0.9"/><line x1="787.5" y1="379.5" x2="800.5" y2="365.5" stroke="#b0b0b0" stroke-width="0.7" opacity="0.9"/><line x1="788.8" y1="379.76" x2="801.8" y2="365.76" stroke="#b0b0b0" stroke-width="0.7" opacity="0.9"/><line x1="790.1" y1="380.02" x2="803.1" y2="366.02" stroke="#b0b0b0" stroke-width="0.7" opacity="0.9"/><line x1="802.9" y1="378.98" x2="815.9" y2="364.98" stroke="#b0b0b0" stroke-width="0.7" opacity="0.9"/><line x1="804.2" y1="379.24" x2="817.2" y2="365.24" stroke="#b0b0b0" stroke-width="0.7" opacity="0.9"/><line x1="805.5" y1="379.5" x2="818.5" y2="365.5" stroke="#b0b0b0" stroke-width="0.7" opacity="0.9"/><line x1="806.8" y1="379.76" x2="819.8" y2="365.76" stroke="#b0b0b0" stroke-width="0.7" opacity="0.9"/><line x1="808.1" y1="380.02" x2="821.1" y2="366.02" stroke="#b0b0b0" stroke-width="0.7" opacity="0.9"/><line x1="758" y1="359" x2="846" y2="359" stroke="#1010ff" stroke-width="1.4" stroke-dasharray="3,2.5" opacity="1"/><path d="M848,356.5 L852,359 L848,361.5" stroke="#1010ff" stroke-width="0.9" fill="none" opacity="1"/><path d="M803,324 V312.5 H809" stroke="#1010ff" stroke-width="1.4" fill="none" stroke-dasharray="3,2" opacity="1"/><line x1="766.5" y1="361" x2="839.5" y2="361" stroke="#ff1a1a" stroke-width="2.6" opacity="1"/><line x1="803" y1="324" x2="803" y2="397" stroke="#ff1a1a" stroke-width="2.6" opacity="1"/><line x1="803" y1="397" x2="803" y2="402" stroke="#1010ff" stroke-width="1.2" opacity="1"/><line x1="788" y1="350" x2="794" y2="350" stroke="#00ff00" stroke-width="2.0" stroke-dasharray="1.3,0.7" opacity="0.85"/><line x1="807" y1="350" x2="813" y2="350" stroke="#00ff00" stroke-width="2.0" stroke-dasharray="1.3,0.7" opacity="0.85"/><line x1="789" y1="368" x2="795" y2="368" stroke="#00ff00" stroke-width="2.0" stroke-dasharray="1.3,0.7" opacity="0.85"/><line x1="809" y1="368" x2="815" y2="368" stroke="#00ff00" stroke-width="2.0" stroke-dasharray="1.3,0.7" opacity="0.85"/><path d="M824,331 L827.5,327 H846" stroke="#9a9a9a" stroke-width="0.9" fill="none" opacity="1"/><path d="M824,337.5 L828,331.5 H846" stroke="#9a9a9a" stroke-width="0.9" fill="none" opacity="1"/><path d="M822,354.5 L830,341.5 H846" stroke="#9a9a9a" stroke-width="0.9" fill="none" opacity="1"/><circle cx="824" cy="331" r="1" stroke="#00ff00" stroke-width="0.8" fill="#00ff00" opacity="1"/><circle cx="824" cy="337.5" r="1" stroke="#00ff00" stroke-width="0.8" fill="#00ff00" opacity="1"/><circle cx="822" cy="354.5" r="1" stroke="#00ff00" stroke-width="0.8" fill="#00ff00" opacity="1"/><line x1="846" y1="327.5" x2="852" y2="327.5" stroke="#00ff00" stroke-width="2.0" stroke-dasharray="1.3,0.7" opacity="0.85"/><line x1="846" y1="331.5" x2="860" y2="331.5" stroke="#00ff00" stroke-width="2.0" stroke-dasharray="1.3,0.7" opacity="0.85"/><line x1="846" y1="341.5" x2="858" y2="341.5" stroke="#00ff00" stroke-width="2.0" stroke-dasharray="1.3,0.7" opacity="0.85"/><circle cx="814.3" cy="312" r="5" stroke="#1010ff" stroke-width="1.3" fill="none" opacity="1"/><line x1="808.8" y1="312" x2="819.8" y2="312" stroke="#ffff00" stroke-width="1.1" opacity="1"/><line x1="810.8" y1="314.3" x2="817.8" y2="314.3" stroke="#00ff00" stroke-width="2.0" stroke-dasharray="1.3,0.7" opacity="0.85"/><path d="M808.3,311 L810.3,307.5 M820.3,311 L818.3,307.5" stroke="#ff1a1a" stroke-width="0.8" fill="none" opacity="0.55"/><circle cx="758.6" cy="351.4" r="5" stroke="#1010ff" stroke-width="1.3" fill="none" opacity="1"/><line x1="753.1" y1="351.4" x2="764.1" y2="351.4" stroke="#ffff00" stroke-width="1.1" opacity="1"/><line x1="755.1" y1="353.7" x2="762.1" y2="353.7" stroke="#00ff00" stroke-width="2.0" stroke-dasharray="1.3,0.7" opacity="0.85"/><path d="M752.6,350.4 L754.6,346.9 M764.6,350.4 L762.6,346.9" stroke="#ff1a1a" stroke-width="0.8" fill="none" opacity="0.55"/><circle cx="758.6" cy="368.3" r="5" stroke="#1010ff" stroke-width="1.3" fill="none" opacity="1"/><line x1="753.1" y1="368.3" x2="764.1" y2="368.3" stroke="#ffff00" stroke-width="1.1" opacity="1"/><line x1="755.1" y1="370.6" x2="762.1" y2="370.6" stroke="#00ff00" stroke-width="2.0" stroke-dasharray="1.3,0.7" opacity="0.85"/><path d="M752.6,367.3 L754.6,363.8 M764.6,367.3 L762.6,363.8" stroke="#ff1a1a" stroke-width="0.8" fill="none" opacity="0.55"/><line x1="758.6" y1="356.5" x2="758.6" y2="363" stroke="#1010ff" stroke-width="1.2" opacity="1"/><circle cx="789.8" cy="410.7" r="5.5" stroke="#1010ff" stroke-width="1.4" fill="none" opacity="1"/><line x1="784.3" y1="411.2" x2="795.3" y2="411.2" stroke="#1010ff" stroke-width="0.9" opacity="1"/><line x1="785.8" y1="413.2" x2="793.8" y2="413.2" stroke="#00ff00" stroke-width="2.0" stroke-dasharray="1.3,0.7" opacity="0.85"/><line x1="796.8" y1="408.4" x2="812.8" y2="408.4" stroke="#1010ff" stroke-width="2.0" stroke-dasharray="1.3,0.7" opacity="1"/><line x1="796.8" y1="410.09999999999997" x2="812.8" y2="410.09999999999997" stroke="#1010ff" stroke-width="0.8" opacity="1"/><line x1="796.8" y1="413.3" x2="806.4" y2="413.3" stroke="#00ff00" stroke-width="2.0" stroke-dasharray="1.3,0.7" opacity="0.85"/><line x1="881" y1="371.5" x2="881" y2="449.5" stroke="#9a9a9a" stroke-width="0.9" opacity="1"/><line x1="882.5" y1="371.5" x2="882.5" y2="449.5" stroke="#9a9a9a" stroke-width="0.9" opacity="1"/><line x1="903" y1="371.5" x2="903" y2="449.5" stroke="#9a9a9a" stroke-width="1" opacity="1"/><line x1="906.5" y1="371.5" x2="906.5" y2="449.5" stroke="#9a9a9a" stroke-width="1" opacity="1"/><line x1="910.5" y1="371.5" x2="910.5" y2="449.5" stroke="#9a9a9a" stroke-width="1" opacity="1"/><line x1="890" y1="379.5" x2="890" y2="441.5" stroke="#9a9a9a" stroke-width="1" opacity="1"/><line x1="892.5" y1="379.5" x2="892.5" y2="441.5" stroke="#9a9a9a" stroke-width="1" opacity="1"/><line x1="895" y1="379.5" x2="895" y2="441.5" stroke="#9a9a9a" stroke-width="1" opacity="1"/><line x1="887" y1="375.5" x2="887" y2="445.5" stroke="#ff00ff" stroke-width="1.5" opacity="1"/><line x1="897.5" y1="375.5" x2="897.5" y2="445.5" stroke="#ff00ff" stroke-width="1.5" opacity="1"/><path d="M885,383.5 V374.5 Q885,372.5 887,372.5 H898 Q900,372.5 900,374.5 V383.5" stroke="#1010ff" stroke-width="1.2" fill="none" opacity="1"/><path d="M885,437.5 V446.5 Q885,448.5 887,448.5 H898 Q900,448.5 900,446.5 V437.5" stroke="#1010ff" stroke-width="1.2" fill="none" opacity="1"/><line x1="889" y1="381.0" x2="896" y2="381.0" stroke="#00ff00" stroke-width="2.0" stroke-dasharray="1.3,0.7" opacity="0.85"/><line x1="889" y1="409.0" x2="896" y2="409.0" stroke="#00ff00" stroke-width="2.0" stroke-dasharray="1.3,0.7" opacity="0.85"/><line x1="889" y1="437.0" x2="896" y2="437.0" stroke="#00ff00" stroke-width="2.0" stroke-dasharray="1.3,0.7" opacity="0.85"/><line x1="878" y1="377.5" x2="880.6" y2="377.5" stroke="#00ff00" stroke-width="2.0" stroke-dasharray="1.3,0.7" opacity="0.85"/><line x1="899.5" y1="377.5" x2="902.1" y2="377.5" stroke="#00ff00" stroke-width="2.0" stroke-dasharray="1.3,0.7" opacity="0.85"/><line x1="878" y1="388.5" x2="880.6" y2="388.5" stroke="#00ff00" stroke-width="2.0" stroke-dasharray="1.3,0.7" opacity="0.85"/><line x1="899.5" y1="388.5" x2="902.1" y2="388.5" stroke="#00ff00" stroke-width="2.0" stroke-dasharray="1.3,0.7" opacity="0.85"/><line x1="878" y1="399.5" x2="880.6" y2="399.5" stroke="#00ff00" stroke-width="2.0" stroke-dasharray="1.3,0.7" opacity="0.85"/><line x1="899.5" y1="399.5" x2="902.1" y2="399.5" stroke="#00ff00" stroke-width="2.0" stroke-dasharray="1.3,0.7" opacity="0.85"/><line x1="878" y1="410.5" x2="880.6" y2="410.5" stroke="#00ff00" stroke-width="2.0" stroke-dasharray="1.3,0.7" opacity="0.85"/><line x1="899.5" y1="410.5" x2="902.1" y2="410.5" stroke="#00ff00" stroke-width="2.0" stroke-dasharray="1.3,0.7" opacity="0.85"/><line x1="878" y1="421.5" x2="880.6" y2="421.5" stroke="#00ff00" stroke-width="2.0" stroke-dasharray="1.3,0.7" opacity="0.85"/><line x1="899.5" y1="421.5" x2="902.1" y2="421.5" stroke="#00ff00" stroke-width="2.0" stroke-dasharray="1.3,0.7" opacity="0.85"/><line x1="878" y1="432.5" x2="880.6" y2="432.5" stroke="#00ff00" stroke-width="2.0" stroke-dasharray="1.3,0.7" opacity="0.85"/><line x1="899.5" y1="432.5" x2="902.1" y2="432.5" stroke="#00ff00" stroke-width="2.0" stroke-dasharray="1.3,0.7" opacity="0.85"/><line x1="878" y1="443.5" x2="880.6" y2="443.5" stroke="#00ff00" stroke-width="2.0" stroke-dasharray="1.3,0.7" opacity="0.85"/><line x1="899.5" y1="443.5" x2="902.1" y2="443.5" stroke="#00ff00" stroke-width="2.0" stroke-dasharray="1.3,0.7" opacity="0.85"/><line x1="880" y1="377.5" x2="903" y2="445.5" stroke="#d0d0d0" stroke-width="0.8" opacity="1"/><path d="M900,372.5 Q903,361 905,361" stroke="#1010ff" stroke-width="1.1" fill="none" opacity="1"/><path d="M900,448.5 Q903,457.7 905,457.7" stroke="#1010ff" stroke-width="1.1" fill="none" opacity="1"/><circle cx="910" cy="361" r="5" stroke="#1010ff" stroke-width="1.3" fill="none" opacity="1"/><line x1="904.5" y1="361" x2="915.5" y2="361" stroke="#ffff00" stroke-width="1.1" opacity="1"/><line x1="906.5" y1="363.3" x2="913.5" y2="363.3" stroke="#00ff00" stroke-width="2.0" stroke-dasharray="1.3,0.7" opacity="0.85"/><circle cx="910" cy="457.7" r="5" stroke="#1010ff" stroke-width="1.3" fill="none" opacity="1"/><line x1="904.5" y1="457.7" x2="915.5" y2="457.7" stroke="#ffff00" stroke-width="1.1" opacity="1"/><line x1="906.5" y1="460.0" x2="913.5" y2="460.0" stroke="#00ff00" stroke-width="2.0" stroke-dasharray="1.3,0.7" opacity="0.85"/><circle cx="883.3" cy="468.5" r="5.5" stroke="#1010ff" stroke-width="1.4" fill="none" opacity="1"/><line x1="877.8" y1="469.0" x2="888.8" y2="469.0" stroke="#1010ff" stroke-width="0.9" opacity="1"/><line x1="879.3" y1="471.0" x2="887.3" y2="471.0" stroke="#00ff00" stroke-width="2.0" stroke-dasharray="1.3,0.7" opacity="0.85"/><line x1="890.3" y1="466.2" x2="907.3" y2="466.2" stroke="#1010ff" stroke-width="2.0" stroke-dasharray="1.3,0.7" opacity="1"/><line x1="890.3" y1="467.9" x2="907.3" y2="467.9" stroke="#1010ff" stroke-width="0.8" opacity="1"/><line x1="890.3" y1="471.1" x2="900.5" y2="471.1" stroke="#00ff00" stroke-width="2.0" stroke-dasharray="1.3,0.7" opacity="0.85"/><line x1="390" y1="464" x2="390" y2="544" stroke="#9a9a9a" stroke-width="0.9" opacity="1"/><line x1="391.5" y1="464" x2="391.5" y2="544" stroke="#9a9a9a" stroke-width="0.9" opacity="1"/><line x1="412" y1="464" x2="412" y2="544" stroke="#9a9a9a" stroke-width="1" opacity="1"/><line x1="415.5" y1="464" x2="415.5" y2="544" stroke="#9a9a9a" stroke-width="1" opacity="1"/><line x1="419.5" y1="464" x2="419.5" y2="544" stroke="#9a9a9a" stroke-width="1" opacity="1"/><rect x="395.5" y="466" width="11.5" height="76" fill="#80453a" opacity="0.45"/><clipPath id="c150"><rect x="395.5" y="466" width="11.5" height="76"/></clipPath><g clip-path="url(#c150)" stroke="#80453a" stroke-width="0.9" opacity="0.6"><line x1="395.5" y1="466" x2="319.5" y2="542"/><line x1="398.0" y1="466" x2="322.0" y2="542"/><line x1="400.5" y1="466" x2="324.5" y2="542"/><line x1="403.0" y1="466" x2="327.0" y2="542"/><line x1="405.5" y1="466" x2="329.5" y2="542"/><line x1="408.0" y1="466" x2="332.0" y2="542"/><line x1="410.5" y1="466" x2="334.5" y2="542"/><line x1="413.0" y1="466" x2="337.0" y2="542"/><line x1="415.5" y1="466" x2="339.5" y2="542"/><line x1="418.0" y1="466" x2="342.0" y2="542"/><line x1="420.5" y1="466" x2="344.5" y2="542"/><line x1="423.0" y1="466" x2="347.0" y2="542"/><line x1="425.5" y1="466" x2="349.5" y2="542"/><line x1="428.0" y1="466" x2="352.0" y2="542"/><line x1="430.5" y1="466" x2="354.5" y2="542"/><line x1="433.0" y1="466" x2="357.0" y2="542"/><line x1="435.5" y1="466" x2="359.5" y2="542"/><line x1="438.0" y1="466" x2="362.0" y2="542"/><line x1="440.5" y1="466" x2="364.5" y2="542"/><line x1="443.0" y1="466" x2="367.0" y2="542"/><line x1="445.5" y1="466" x2="369.5" y2="542"/><line x1="448.0" y1="466" x2="372.0" y2="542"/><line x1="450.5" y1="466" x2="374.5" y2="542"/><line x1="453.0" y1="466" x2="377.0" y2="542"/><line x1="455.5" y1="466" x2="379.5" y2="542"/><line x1="458.0" y1="466" x2="382.0" y2="542"/><line x1="460.5" y1="466" x2="384.5" y2="542"/><line x1="463.0" y1="466" x2="387.0" y2="542"/><line x1="465.5" y1="466" x2="389.5" y2="542"/><line x1="468.0" y1="466" x2="392.0" y2="542"/><line x1="470.5" y1="466" x2="394.5" y2="542"/><line x1="473.0" y1="466" x2="397.0" y2="542"/><line x1="475.5" y1="466" x2="399.5" y2="542"/><line x1="478.0" y1="466" x2="402.0" y2="542"/><line x1="480.5" y1="466" x2="404.5" y2="542"/></g><line x1="399" y1="472" x2="399" y2="536" stroke="#9a9a9a" stroke-width="1" opacity="1"/><line x1="401.5" y1="472" x2="401.5" y2="536" stroke="#9a9a9a" stroke-width="1" opacity="1"/><line x1="404" y1="472" x2="404" y2="536" stroke="#9a9a9a" stroke-width="1" opacity="1"/><path d="M396.5,470 V504.0 H406 V538" stroke="#ff00ff" stroke-width="1.4" fill="none" opacity="1"/><path d="M406,470 V501.0" stroke="#ff00ff" stroke-width="1.2" fill="none" opacity="1"/><path d="M394,476 V467 Q394,465 396,465 H407 Q409,465 409,467 V476" stroke="#1010ff" stroke-width="1.2" fill="none" opacity="1"/><path d="M394,532 V541 Q394,543 396,543 H407 Q409,543 409,541 V532" stroke="#1010ff" stroke-width="1.2" fill="none" opacity="1"/><line x1="398" y1="473.5" x2="405" y2="473.5" stroke="#00ff00" stroke-width="2.0" stroke-dasharray="1.3,0.7" opacity="0.85"/><line x1="398" y1="502.5" x2="405" y2="502.5" stroke="#00ff00" stroke-width="2.0" stroke-dasharray="1.3,0.7" opacity="0.85"/><line x1="398" y1="531.5" x2="405" y2="531.5" stroke="#00ff00" stroke-width="2.0" stroke-dasharray="1.3,0.7" opacity="0.85"/><line x1="387" y1="470.0" x2="389.6" y2="470.0" stroke="#00ff00" stroke-width="2.0" stroke-dasharray="1.3,0.7" opacity="0.85"/><line x1="408.5" y1="470.0" x2="411.1" y2="470.0" stroke="#00ff00" stroke-width="2.0" stroke-dasharray="1.3,0.7" opacity="0.85"/><line x1="387" y1="481.3333333333333" x2="389.6" y2="481.3333333333333" stroke="#00ff00" stroke-width="2.0" stroke-dasharray="1.3,0.7" opacity="0.85"/><line x1="408.5" y1="481.3333333333333" x2="411.1" y2="481.3333333333333" stroke="#00ff00" stroke-width="2.0" stroke-dasharray="1.3,0.7" opacity="0.85"/><line x1="387" y1="492.6666666666667" x2="389.6" y2="492.6666666666667" stroke="#00ff00" stroke-width="2.0" stroke-dasharray="1.3,0.7" opacity="0.85"/><line x1="408.5" y1="492.6666666666667" x2="411.1" y2="492.6666666666667" stroke="#00ff00" stroke-width="2.0" stroke-dasharray="1.3,0.7" opacity="0.85"/><line x1="387" y1="504.0" x2="389.6" y2="504.0" stroke="#00ff00" stroke-width="2.0" stroke-dasharray="1.3,0.7" opacity="0.85"/><line x1="408.5" y1="504.0" x2="411.1" y2="504.0" stroke="#00ff00" stroke-width="2.0" stroke-dasharray="1.3,0.7" opacity="0.85"/><line x1="387" y1="515.3333333333334" x2="389.6" y2="515.3333333333334" stroke="#00ff00" stroke-width="2.0" stroke-dasharray="1.3,0.7" opacity="0.85"/><line x1="408.5" y1="515.3333333333334" x2="411.1" y2="515.3333333333334" stroke="#00ff00" stroke-width="2.0" stroke-dasharray="1.3,0.7" opacity="0.85"/><line x1="387" y1="526.6666666666666" x2="389.6" y2="526.6666666666666" stroke="#00ff00" stroke-width="2.0" stroke-dasharray="1.3,0.7" opacity="0.85"/><line x1="408.5" y1="526.6666666666666" x2="411.1" y2="526.6666666666666" stroke="#00ff00" stroke-width="2.0" stroke-dasharray="1.3,0.7" opacity="0.85"/><line x1="387" y1="538.0" x2="389.6" y2="538.0" stroke="#00ff00" stroke-width="2.0" stroke-dasharray="1.3,0.7" opacity="0.85"/><line x1="408.5" y1="538.0" x2="411.1" y2="538.0" stroke="#00ff00" stroke-width="2.0" stroke-dasharray="1.3,0.7" opacity="0.85"/><line x1="389" y1="470" x2="412" y2="540" stroke="#d0d0d0" stroke-width="0.8" opacity="1"/><path d="M409,465 Q412,453 413,453" stroke="#1010ff" stroke-width="1.1" fill="none" opacity="1"/><path d="M409,543 Q412,552 413,552" stroke="#1010ff" stroke-width="1.1" fill="none" opacity="1"/><circle cx="418" cy="453" r="5" stroke="#1010ff" stroke-width="1.3" fill="none" opacity="1"/><line x1="412.5" y1="453" x2="423.5" y2="453" stroke="#ffff00" stroke-width="1.1" opacity="1"/><line x1="414.5" y1="455.3" x2="421.5" y2="455.3" stroke="#00ff00" stroke-width="2.0" stroke-dasharray="1.3,0.7" opacity="0.85"/><circle cx="418" cy="552" r="5" stroke="#1010ff" stroke-width="1.3" fill="none" opacity="1"/><line x1="412.5" y1="552" x2="423.5" y2="552" stroke="#ffff00" stroke-width="1.1" opacity="1"/><line x1="414.5" y1="554.3" x2="421.5" y2="554.3" stroke="#00ff00" stroke-width="2.0" stroke-dasharray="1.3,0.7" opacity="0.85"/><circle cx="392.4" cy="561.8" r="5.5" stroke="#1010ff" stroke-width="1.4" fill="none" opacity="1"/><line x1="386.9" y1="562.3" x2="397.9" y2="562.3" stroke="#1010ff" stroke-width="0.9" opacity="1"/><line x1="388.4" y1="564.3" x2="396.4" y2="564.3" stroke="#00ff00" stroke-width="2.0" stroke-dasharray="1.3,0.7" opacity="0.85"/><line x1="399.4" y1="559.5" x2="416.4" y2="559.5" stroke="#1010ff" stroke-width="2.0" stroke-dasharray="1.3,0.7" opacity="1"/><line x1="399.4" y1="561.1999999999999" x2="416.4" y2="561.1999999999999" stroke="#1010ff" stroke-width="0.8" opacity="1"/><line x1="399.4" y1="564.4" x2="409.59999999999997" y2="564.4" stroke="#00ff00" stroke-width="2.0" stroke-dasharray="1.3,0.7" opacity="0.85"/><line x1="763" y1="440.2" x2="843" y2="440.2" stroke="#9a9a9a" stroke-width="1.2" opacity="1"/><line x1="763" y1="444.2" x2="843" y2="444.2" stroke="#9a9a9a" stroke-width="1.2" opacity="1"/><line x1="763" y1="458.4" x2="843" y2="458.4" stroke="#9a9a9a" stroke-width="1.2" opacity="1"/><line x1="763" y1="461.3" x2="843" y2="461.3" stroke="#9a9a9a" stroke-width="1.2" opacity="1"/><rect x="767" y="442.1" width="7" height="12.299999999999955" fill="#80453a" opacity="0.45"/><clipPath id="c231"><rect x="767" y="442.1" width="7" height="12.299999999999955"/></clipPath><g clip-path="url(#c231)" stroke="#80453a" stroke-width="0.9" opacity="0.9"><line x1="767" y1="442.1" x2="754.7" y2="454.4"/><line x1="769" y1="442.1" x2="756.7" y2="454.4"/><line x1="771" y1="442.1" x2="758.7" y2="454.4"/><line x1="773" y1="442.1" x2="760.7" y2="454.4"/><line x1="775" y1="442.1" x2="762.7" y2="454.4"/><line x1="777" y1="442.1" x2="764.7" y2="454.4"/><line x1="779" y1="442.1" x2="766.7" y2="454.4"/><line x1="781" y1="442.1" x2="768.7" y2="454.4"/><line x1="783" y1="442.1" x2="770.7" y2="454.4"/><line x1="785" y1="442.1" x2="772.7" y2="454.4"/></g><rect x="832" y="442.1" width="7" height="12.299999999999955" fill="#80453a" opacity="0.45"/><clipPath id="c244"><rect x="832" y="442.1" width="7" height="12.299999999999955"/></clipPath><g clip-path="url(#c244)" stroke="#80453a" stroke-width="0.9" opacity="0.9"><line x1="832" y1="442.1" x2="819.7" y2="454.4"/><line x1="834" y1="442.1" x2="821.7" y2="454.4"/><line x1="836" y1="442.1" x2="823.7" y2="454.4"/><line x1="838" y1="442.1" x2="825.7" y2="454.4"/><line x1="840" y1="442.1" x2="827.7" y2="454.4"/><line x1="842" y1="442.1" x2="829.7" y2="454.4"/><line x1="844" y1="442.1" x2="831.7" y2="454.4"/><line x1="846" y1="442.1" x2="833.7" y2="454.4"/><line x1="848" y1="442.1" x2="835.7" y2="454.4"/><line x1="850" y1="442.1" x2="837.7" y2="454.4"/></g><line x1="770" y1="443.1" x2="836" y2="443.1" stroke="#ff00ff" stroke-width="1.5" opacity="1"/><line x1="770" y1="453.4" x2="836" y2="453.4" stroke="#ff00ff" stroke-width="1.5" opacity="1"/><line x1="773" y1="446.45" x2="833" y2="446.45" stroke="#9a9a9a" stroke-width="1.1" opacity="1"/><line x1="773" y1="450.05" x2="833" y2="450.05" stroke="#9a9a9a" stroke-width="1.1" opacity="1"/><path d="M770,445.25 H775 V451.25 H770" stroke="#ff00ff" stroke-width="1.2" fill="none" opacity="1"/><path d="M836,445.25 H831 V451.25 H836" stroke="#ff00ff" stroke-width="1.2" fill="none" opacity="1"/><line x1="774.2" y1="446.25" x2="777.8000000000001" y2="446.25" stroke="#00ff00" stroke-width="2.0" stroke-dasharray="1.3,0.7" opacity="0.85"/><line x1="774.2" y1="450.25" x2="777.8000000000001" y2="450.25" stroke="#00ff00" stroke-width="2.0" stroke-dasharray="1.3,0.7" opacity="0.85"/><line x1="801.2" y1="446.25" x2="804.8000000000001" y2="446.25" stroke="#00ff00" stroke-width="2.0" stroke-dasharray="1.3,0.7" opacity="0.85"/><line x1="801.2" y1="450.25" x2="804.8000000000001" y2="450.25" stroke="#00ff00" stroke-width="2.0" stroke-dasharray="1.3,0.7" opacity="0.85"/><line x1="828.2" y1="446.25" x2="831.8000000000001" y2="446.25" stroke="#00ff00" stroke-width="2.0" stroke-dasharray="1.3,0.7" opacity="0.85"/><line x1="828.2" y1="450.25" x2="831.8000000000001" y2="450.25" stroke="#00ff00" stroke-width="2.0" stroke-dasharray="1.3,0.7" opacity="0.85"/><line x1="766" y1="444.2" x2="766" y2="442.1" stroke="#9a9a9a" stroke-width="0.8" opacity="1"/><line x1="766" y1="454.4" x2="766" y2="458.4" stroke="#9a9a9a" stroke-width="0.8" opacity="1"/><line x1="769" y1="444.2" x2="769" y2="442.1" stroke="#9a9a9a" stroke-width="0.8" opacity="1"/><line x1="769" y1="454.4" x2="769" y2="458.4" stroke="#9a9a9a" stroke-width="0.8" opacity="1"/><line x1="775" y1="444.2" x2="775" y2="442.1" stroke="#9a9a9a" stroke-width="0.8" opacity="1"/><line x1="775" y1="454.4" x2="775" y2="458.4" stroke="#9a9a9a" stroke-width="0.8" opacity="1"/><line x1="803.0" y1="444.2" x2="803.0" y2="442.1" stroke="#9a9a9a" stroke-width="0.8" opacity="1"/><line x1="803.0" y1="454.4" x2="803.0" y2="458.4" stroke="#9a9a9a" stroke-width="0.8" opacity="1"/><line x1="831" y1="444.2" x2="831" y2="442.1" stroke="#9a9a9a" stroke-width="0.8" opacity="1"/><line x1="831" y1="454.4" x2="831" y2="458.4" stroke="#9a9a9a" stroke-width="0.8" opacity="1"/><line x1="837" y1="444.2" x2="837" y2="442.1" stroke="#9a9a9a" stroke-width="0.8" opacity="1"/><line x1="837" y1="454.4" x2="837" y2="458.4" stroke="#9a9a9a" stroke-width="0.8" opacity="1"/><line x1="840" y1="444.2" x2="840" y2="442.1" stroke="#9a9a9a" stroke-width="0.8" opacity="1"/><line x1="840" y1="454.4" x2="840" y2="458.4" stroke="#9a9a9a" stroke-width="0.8" opacity="1"/><line x1="766" y1="442.2" x2="770" y2="442.2" stroke="#00ff00" stroke-width="2.0" stroke-dasharray="1.3,0.7" opacity="0.85"/><line x1="766" y1="456.4" x2="770" y2="456.4" stroke="#00ff00" stroke-width="2.0" stroke-dasharray="1.3,0.7" opacity="0.85"/><line x1="772" y1="442.2" x2="776" y2="442.2" stroke="#00ff00" stroke-width="2.0" stroke-dasharray="1.3,0.7" opacity="0.85"/><line x1="772" y1="456.4" x2="776" y2="456.4" stroke="#00ff00" stroke-width="2.0" stroke-dasharray="1.3,0.7" opacity="0.85"/><line x1="785" y1="442.2" x2="790" y2="442.2" stroke="#00ff00" stroke-width="2.0" stroke-dasharray="1.3,0.7" opacity="0.85"/><line x1="785" y1="456.4" x2="790" y2="456.4" stroke="#00ff00" stroke-width="2.0" stroke-dasharray="1.3,0.7" opacity="0.85"/><line x1="813.0" y1="442.2" x2="818.0" y2="442.2" stroke="#00ff00" stroke-width="2.0" stroke-dasharray="1.3,0.7" opacity="0.85"/><line x1="813.0" y1="456.4" x2="818.0" y2="456.4" stroke="#00ff00" stroke-width="2.0" stroke-dasharray="1.3,0.7" opacity="0.85"/><line x1="827" y1="442.2" x2="832" y2="442.2" stroke="#00ff00" stroke-width="2.0" stroke-dasharray="1.3,0.7" opacity="0.85"/><line x1="827" y1="456.4" x2="832" y2="456.4" stroke="#00ff00" stroke-width="2.0" stroke-dasharray="1.3,0.7" opacity="0.85"/><line x1="835" y1="442.2" x2="839" y2="442.2" stroke="#00ff00" stroke-width="2.0" stroke-dasharray="1.3,0.7" opacity="0.85"/><line x1="835" y1="456.4" x2="839" y2="456.4" stroke="#00ff00" stroke-width="2.0" stroke-dasharray="1.3,0.7" opacity="0.85"/><line x1="800.0" y1="438.7" x2="806.0" y2="438.7" stroke="#00ff00" stroke-width="2.0" stroke-dasharray="1.3,0.7" opacity="0.85"/><line x1="800.0" y1="463.3" x2="806.0" y2="463.3" stroke="#00ff00" stroke-width="2.0" stroke-dasharray="1.3,0.7" opacity="0.85"/><line x1="845" y1="441.1" x2="845" y2="457.4" stroke="#9a9a9a" stroke-width="0.9" opacity="1"/><line x1="848" y1="441.1" x2="848" y2="457.4" stroke="#9a9a9a" stroke-width="0.9" opacity="1"/><line x1="842" y1="446.25" x2="844.5" y2="446.25" stroke="#00ff00" stroke-width="2.0" stroke-dasharray="1.3,0.7" opacity="0.85"/><line x1="845.5" y1="449.25" x2="848.0" y2="449.25" stroke="#00ff00" stroke-width="2.0" stroke-dasharray="1.3,0.7" opacity="0.85"/><rect x="823.2" y="432.3" width="26.4" height="30.7" rx="4" stroke="#1010ff" stroke-width="1.4" fill="none" stroke-dasharray="5,3" opacity="1"/><path d="M849.6,436 Q851,424.4 855,424.4" stroke="#1010ff" stroke-width="1.1" fill="none" opacity="1"/><circle cx="860.2" cy="424.4" r="5" stroke="#1010ff" stroke-width="1.3" fill="none" opacity="1"/><line x1="854.7" y1="424.4" x2="865.7" y2="424.4" stroke="#ffff00" stroke-width="1.1" opacity="1"/><line x1="856.7" y1="426.7" x2="863.7" y2="426.7" stroke="#00ff00" stroke-width="2.0" stroke-dasharray="1.3,0.7" opacity="0.85"/><circle cx="781.6" cy="472.4" r="5.5" stroke="#1010ff" stroke-width="1.4" fill="none" opacity="1"/><line x1="776.1" y1="472.9" x2="787.1" y2="472.9" stroke="#1010ff" stroke-width="0.9" opacity="1"/><line x1="777.6" y1="474.9" x2="785.6" y2="474.9" stroke="#00ff00" stroke-width="2.0" stroke-dasharray="1.3,0.7" opacity="0.85"/><line x1="788.6" y1="470.09999999999997" x2="804.6" y2="470.09999999999997" stroke="#1010ff" stroke-width="2.0" stroke-dasharray="1.3,0.7" opacity="1"/><line x1="788.6" y1="471.79999999999995" x2="804.6" y2="471.79999999999995" stroke="#1010ff" stroke-width="0.8" opacity="1"/><line x1="788.6" y1="475.0" x2="798.2" y2="475.0" stroke="#00ff00" stroke-width="2.0" stroke-dasharray="1.3,0.7" opacity="0.85"/><line x1="762.6" y1="511.4" x2="842.5" y2="511.4" stroke="#9a9a9a" stroke-width="1.2" opacity="1"/><line x1="762.6" y1="515.4" x2="842.5" y2="515.4" stroke="#9a9a9a" stroke-width="1.2" opacity="1"/><line x1="762.6" y1="533" x2="842.5" y2="533" stroke="#9a9a9a" stroke-width="1.2" opacity="1"/><line x1="762.6" y1="536" x2="842.5" y2="536" stroke="#9a9a9a" stroke-width="1.2" opacity="1"/><rect x="766.6" y="518.4" width="7" height="11.600000000000023" fill="#80453a" opacity="0.45"/><clipPath id="c316"><rect x="766.6" y="518.4" width="7" height="11.600000000000023"/></clipPath><g clip-path="url(#c316)" stroke="#80453a" stroke-width="0.9" opacity="0.9"><line x1="766.6" y1="518.4" x2="755.0" y2="530.0"/><line x1="768.6" y1="518.4" x2="757.0" y2="530.0"/><line x1="770.6" y1="518.4" x2="759.0" y2="530.0"/><line x1="772.6" y1="518.4" x2="761.0" y2="530.0"/><line x1="774.6" y1="518.4" x2="763.0" y2="530.0"/><line x1="776.6" y1="518.4" x2="765.0" y2="530.0"/><line x1="778.6" y1="518.4" x2="767.0" y2="530.0"/><line x1="780.6" y1="518.4" x2="769.0" y2="530.0"/><line x1="782.6" y1="518.4" x2="771.0" y2="530.0"/><line x1="784.6" y1="518.4" x2="773.0" y2="530.0"/></g><rect x="831.5" y="518.4" width="7" height="11.600000000000023" fill="#80453a" opacity="0.45"/><clipPath id="c329"><rect x="831.5" y="518.4" width="7" height="11.600000000000023"/></clipPath><g clip-path="url(#c329)" stroke="#80453a" stroke-width="0.9" opacity="0.9"><line x1="831.5" y1="518.4" x2="819.9" y2="530.0"/><line x1="833.5" y1="518.4" x2="821.9" y2="530.0"/><line x1="835.5" y1="518.4" x2="823.9" y2="530.0"/><line x1="837.5" y1="518.4" x2="825.9" y2="530.0"/><line x1="839.5" y1="518.4" x2="827.9" y2="530.0"/><line x1="841.5" y1="518.4" x2="829.9" y2="530.0"/><line x1="843.5" y1="518.4" x2="831.9" y2="530.0"/><line x1="845.5" y1="518.4" x2="833.9" y2="530.0"/><line x1="847.5" y1="518.4" x2="835.9" y2="530.0"/><line x1="849.5" y1="518.4" x2="837.9" y2="530.0"/></g><line x1="769.6" y1="519.4" x2="835.5" y2="519.4" stroke="#ff00ff" stroke-width="1.5" opacity="1"/><line x1="769.6" y1="529" x2="835.5" y2="529" stroke="#ff00ff" stroke-width="1.5" opacity="1"/><line x1="772.6" y1="522.4000000000001" x2="832.5" y2="522.4000000000001" stroke="#9a9a9a" stroke-width="1.1" opacity="1"/><line x1="772.6" y1="526.0" x2="832.5" y2="526.0" stroke="#9a9a9a" stroke-width="1.1" opacity="1"/><path d="M769.6,521.2 H774.6 V527.2 H769.6" stroke="#ff00ff" stroke-width="1.2" fill="none" opacity="1"/><path d="M835.5,521.2 H830.5 V527.2 H835.5" stroke="#ff00ff" stroke-width="1.2" fill="none" opacity="1"/><line x1="773.8000000000001" y1="522.2" x2="777.4000000000001" y2="522.2" stroke="#00ff00" stroke-width="2.0" stroke-dasharray="1.3,0.7" opacity="0.85"/><line x1="773.8000000000001" y1="526.2" x2="777.4000000000001" y2="526.2" stroke="#00ff00" stroke-width="2.0" stroke-dasharray="1.3,0.7" opacity="0.85"/><line x1="800.75" y1="522.2" x2="804.35" y2="522.2" stroke="#00ff00" stroke-width="2.0" stroke-dasharray="1.3,0.7" opacity="0.85"/><line x1="800.75" y1="526.2" x2="804.35" y2="526.2" stroke="#00ff00" stroke-width="2.0" stroke-dasharray="1.3,0.7" opacity="0.85"/><line x1="827.7" y1="522.2" x2="831.3000000000001" y2="522.2" stroke="#00ff00" stroke-width="2.0" stroke-dasharray="1.3,0.7" opacity="0.85"/><line x1="827.7" y1="526.2" x2="831.3000000000001" y2="526.2" stroke="#00ff00" stroke-width="2.0" stroke-dasharray="1.3,0.7" opacity="0.85"/><line x1="765.6" y1="515.4" x2="765.6" y2="518.4" stroke="#9a9a9a" stroke-width="0.8" opacity="1"/><line x1="765.6" y1="530" x2="765.6" y2="533" stroke="#9a9a9a" stroke-width="0.8" opacity="1"/><line x1="768.6" y1="515.4" x2="768.6" y2="518.4" stroke="#9a9a9a" stroke-width="0.8" opacity="1"/><line x1="768.6" y1="530" x2="768.6" y2="533" stroke="#9a9a9a" stroke-width="0.8" opacity="1"/><line x1="774.6" y1="515.4" x2="774.6" y2="518.4" stroke="#9a9a9a" stroke-width="0.8" opacity="1"/><line x1="774.6" y1="530" x2="774.6" y2="533" stroke="#9a9a9a" stroke-width="0.8" opacity="1"/><line x1="802.55" y1="515.4" x2="802.55" y2="518.4" stroke="#9a9a9a" stroke-width="0.8" opacity="1"/><line x1="802.55" y1="530" x2="802.55" y2="533" stroke="#9a9a9a" stroke-width="0.8" opacity="1"/><line x1="830.5" y1="515.4" x2="830.5" y2="518.4" stroke="#9a9a9a" stroke-width="0.8" opacity="1"/><line x1="830.5" y1="530" x2="830.5" y2="533" stroke="#9a9a9a" stroke-width="0.8" opacity="1"/><line x1="836.5" y1="515.4" x2="836.5" y2="518.4" stroke="#9a9a9a" stroke-width="0.8" opacity="1"/><line x1="836.5" y1="530" x2="836.5" y2="533" stroke="#9a9a9a" stroke-width="0.8" opacity="1"/><line x1="839.5" y1="515.4" x2="839.5" y2="518.4" stroke="#9a9a9a" stroke-width="0.8" opacity="1"/><line x1="839.5" y1="530" x2="839.5" y2="533" stroke="#9a9a9a" stroke-width="0.8" opacity="1"/><line x1="765.6" y1="513.4" x2="769.6" y2="513.4" stroke="#00ff00" stroke-width="2.0" stroke-dasharray="1.3,0.7" opacity="0.85"/><line x1="765.6" y1="531" x2="769.6" y2="531" stroke="#00ff00" stroke-width="2.0" stroke-dasharray="1.3,0.7" opacity="0.85"/><line x1="771.6" y1="513.4" x2="775.6" y2="513.4" stroke="#00ff00" stroke-width="2.0" stroke-dasharray="1.3,0.7" opacity="0.85"/><line x1="771.6" y1="531" x2="775.6" y2="531" stroke="#00ff00" stroke-width="2.0" stroke-dasharray="1.3,0.7" opacity="0.85"/><line x1="784.6" y1="513.4" x2="789.6" y2="513.4" stroke="#00ff00" stroke-width="2.0" stroke-dasharray="1.3,0.7" opacity="0.85"/><line x1="784.6" y1="531" x2="789.6" y2="531" stroke="#00ff00" stroke-width="2.0" stroke-dasharray="1.3,0.7" opacity="0.85"/><line x1="812.55" y1="513.4" x2="817.55" y2="513.4" stroke="#00ff00" stroke-width="2.0" stroke-dasharray="1.3,0.7" opacity="0.85"/><line x1="812.55" y1="531" x2="817.55" y2="531" stroke="#00ff00" stroke-width="2.0" stroke-dasharray="1.3,0.7" opacity="0.85"/><line x1="826.5" y1="513.4" x2="831.5" y2="513.4" stroke="#00ff00" stroke-width="2.0" stroke-dasharray="1.3,0.7" opacity="0.85"/><line x1="826.5" y1="531" x2="831.5" y2="531" stroke="#00ff00" stroke-width="2.0" stroke-dasharray="1.3,0.7" opacity="0.85"/><line x1="834.5" y1="513.4" x2="838.5" y2="513.4" stroke="#00ff00" stroke-width="2.0" stroke-dasharray="1.3,0.7" opacity="0.85"/><line x1="834.5" y1="531" x2="838.5" y2="531" stroke="#00ff00" stroke-width="2.0" stroke-dasharray="1.3,0.7" opacity="0.85"/><line x1="799.55" y1="509.9" x2="805.55" y2="509.9" stroke="#00ff00" stroke-width="2.0" stroke-dasharray="1.3,0.7" opacity="0.85"/><line x1="799.55" y1="538" x2="805.55" y2="538" stroke="#00ff00" stroke-width="2.0" stroke-dasharray="1.3,0.7" opacity="0.85"/><line x1="844.5" y1="517.4" x2="844.5" y2="533" stroke="#9a9a9a" stroke-width="0.9" opacity="1"/><line x1="847.5" y1="517.4" x2="847.5" y2="533" stroke="#9a9a9a" stroke-width="0.9" opacity="1"/><line x1="841.5" y1="522.2" x2="844.0" y2="522.2" stroke="#00ff00" stroke-width="2.0" stroke-dasharray="1.3,0.7" opacity="0.85"/><line x1="845.0" y1="525.2" x2="847.5" y2="525.2" stroke="#00ff00" stroke-width="2.0" stroke-dasharray="1.3,0.7" opacity="0.85"/><rect x="761.2" y="509.4" width="21.2" height="30.1" rx="4" stroke="#1010ff" stroke-width="1.4" fill="none" stroke-dasharray="5,3" opacity="1"/><path d="M782.4,511 L787,501.2 H788" stroke="#1010ff" stroke-width="1.1" fill="none" opacity="1"/><circle cx="793" cy="501.2" r="5" stroke="#1010ff" stroke-width="1.3" fill="none" opacity="1"/><line x1="787.5" y1="501.2" x2="798.5" y2="501.2" stroke="#ffff00" stroke-width="1.1" opacity="1"/><line x1="789.5" y1="503.5" x2="796.5" y2="503.5" stroke="#00ff00" stroke-width="2.0" stroke-dasharray="1.3,0.7" opacity="0.85"/><circle cx="825.9" cy="546.3" r="5" stroke="#1010ff" stroke-width="1.3" fill="none" opacity="1"/><line x1="820.4" y1="546.3" x2="831.4" y2="546.3" stroke="#ffff00" stroke-width="1.1" opacity="1"/><line x1="822.4" y1="548.5999999999999" x2="829.4" y2="548.5999999999999" stroke="#00ff00" stroke-width="2.0" stroke-dasharray="1.3,0.7" opacity="0.85"/><path d="M819.9,545.3 L821.9,541.8 M831.9,545.3 L829.9,541.8" stroke="#ff1a1a" stroke-width="0.8" fill="none" opacity="0.55"/><circle cx="782" cy="548.4" r="5.5" stroke="#1010ff" stroke-width="1.4" fill="none" opacity="1"/><line x1="776.5" y1="548.9" x2="787.5" y2="548.9" stroke="#1010ff" stroke-width="0.9" opacity="1"/><line x1="778" y1="550.9" x2="786" y2="550.9" stroke="#00ff00" stroke-width="2.0" stroke-dasharray="1.3,0.7" opacity="0.85"/><line x1="789" y1="546.1" x2="805" y2="546.1" stroke="#1010ff" stroke-width="2.0" stroke-dasharray="1.3,0.7" opacity="1"/><line x1="789" y1="547.8" x2="805" y2="547.8" stroke="#1010ff" stroke-width="0.8" opacity="1"/><line x1="789" y1="551.0" x2="798.6" y2="551.0" stroke="#00ff00" stroke-width="2.0" stroke-dasharray="1.3,0.7" opacity="0.85"/><line x1="243.3" y1="511.1" x2="321.7" y2="511.1" stroke="#9a9a9a" stroke-width="1.2" opacity="1"/><line x1="243.3" y1="515.1" x2="321.7" y2="515.1" stroke="#9a9a9a" stroke-width="1.2" opacity="1"/><line x1="243.3" y1="533.3" x2="321.7" y2="533.3" stroke="#9a9a9a" stroke-width="1.2" opacity="1"/><line x1="243.3" y1="536.5" x2="321.7" y2="536.5" stroke="#9a9a9a" stroke-width="1.2" opacity="1"/><rect x="247.3" y="518.4" width="7" height="11.899999999999977" fill="#80453a" opacity="0.45"/><clipPath id="c405"><rect x="247.3" y="518.4" width="7" height="11.899999999999977"/></clipPath><g clip-path="url(#c405)" stroke="#80453a" stroke-width="0.9" opacity="0.9"><line x1="247.3" y1="518.4" x2="235.40000000000003" y2="530.3"/><line x1="249.3" y1="518.4" x2="237.40000000000003" y2="530.3"/><line x1="251.3" y1="518.4" x2="239.40000000000003" y2="530.3"/><line x1="253.3" y1="518.4" x2="241.40000000000003" y2="530.3"/><line x1="255.3" y1="518.4" x2="243.40000000000003" y2="530.3"/><line x1="257.3" y1="518.4" x2="245.40000000000003" y2="530.3"/><line x1="259.3" y1="518.4" x2="247.40000000000003" y2="530.3"/><line x1="261.3" y1="518.4" x2="249.40000000000003" y2="530.3"/><line x1="263.3" y1="518.4" x2="251.40000000000003" y2="530.3"/><line x1="265.3" y1="518.4" x2="253.40000000000003" y2="530.3"/></g><rect x="310.7" y="518.4" width="7" height="11.899999999999977" fill="#80453a" opacity="0.45"/><clipPath id="c418"><rect x="310.7" y="518.4" width="7" height="11.899999999999977"/></clipPath><g clip-path="url(#c418)" stroke="#80453a" stroke-width="0.9" opacity="0.9"><line x1="310.7" y1="518.4" x2="298.8" y2="530.3"/><line x1="312.7" y1="518.4" x2="300.8" y2="530.3"/><line x1="314.7" y1="518.4" x2="302.8" y2="530.3"/><line x1="316.7" y1="518.4" x2="304.8" y2="530.3"/><line x1="318.7" y1="518.4" x2="306.8" y2="530.3"/><line x1="320.7" y1="518.4" x2="308.8" y2="530.3"/><line x1="322.7" y1="518.4" x2="310.8" y2="530.3"/><line x1="324.7" y1="518.4" x2="312.8" y2="530.3"/><line x1="326.7" y1="518.4" x2="314.8" y2="530.3"/><line x1="328.7" y1="518.4" x2="316.8" y2="530.3"/></g><line x1="250.3" y1="519.4" x2="314.7" y2="519.4" stroke="#ff00ff" stroke-width="1.5" opacity="1"/><line x1="250.3" y1="529.3" x2="314.7" y2="529.3" stroke="#ff00ff" stroke-width="1.5" opacity="1"/><line x1="253.3" y1="522.55" x2="311.7" y2="522.55" stroke="#9a9a9a" stroke-width="1.1" opacity="1"/><line x1="253.3" y1="526.1499999999999" x2="311.7" y2="526.1499999999999" stroke="#9a9a9a" stroke-width="1.1" opacity="1"/><path d="M250.3,521.3499999999999 H255.3 V527.3499999999999 H250.3" stroke="#ff00ff" stroke-width="1.2" fill="none" opacity="1"/><path d="M314.7,521.3499999999999 H309.7 V527.3499999999999 H314.7" stroke="#ff00ff" stroke-width="1.2" fill="none" opacity="1"/><line x1="254.5" y1="522.3499999999999" x2="258.1" y2="522.3499999999999" stroke="#00ff00" stroke-width="2.0" stroke-dasharray="1.3,0.7" opacity="0.85"/><line x1="254.5" y1="526.3499999999999" x2="258.1" y2="526.3499999999999" stroke="#00ff00" stroke-width="2.0" stroke-dasharray="1.3,0.7" opacity="0.85"/><line x1="280.7" y1="522.3499999999999" x2="284.3" y2="522.3499999999999" stroke="#00ff00" stroke-width="2.0" stroke-dasharray="1.3,0.7" opacity="0.85"/><line x1="280.7" y1="526.3499999999999" x2="284.3" y2="526.3499999999999" stroke="#00ff00" stroke-width="2.0" stroke-dasharray="1.3,0.7" opacity="0.85"/><line x1="306.9" y1="522.3499999999999" x2="310.5" y2="522.3499999999999" stroke="#00ff00" stroke-width="2.0" stroke-dasharray="1.3,0.7" opacity="0.85"/><line x1="306.9" y1="526.3499999999999" x2="310.5" y2="526.3499999999999" stroke="#00ff00" stroke-width="2.0" stroke-dasharray="1.3,0.7" opacity="0.85"/><line x1="246.3" y1="515.1" x2="246.3" y2="518.4" stroke="#9a9a9a" stroke-width="0.8" opacity="1"/><line x1="246.3" y1="530.3" x2="246.3" y2="533.3" stroke="#9a9a9a" stroke-width="0.8" opacity="1"/><line x1="249.3" y1="515.1" x2="249.3" y2="518.4" stroke="#9a9a9a" stroke-width="0.8" opacity="1"/><line x1="249.3" y1="530.3" x2="249.3" y2="533.3" stroke="#9a9a9a" stroke-width="0.8" opacity="1"/><line x1="255.3" y1="515.1" x2="255.3" y2="518.4" stroke="#9a9a9a" stroke-width="0.8" opacity="1"/><line x1="255.3" y1="530.3" x2="255.3" y2="533.3" stroke="#9a9a9a" stroke-width="0.8" opacity="1"/><line x1="282.5" y1="515.1" x2="282.5" y2="518.4" stroke="#9a9a9a" stroke-width="0.8" opacity="1"/><line x1="282.5" y1="530.3" x2="282.5" y2="533.3" stroke="#9a9a9a" stroke-width="0.8" opacity="1"/><line x1="309.7" y1="515.1" x2="309.7" y2="518.4" stroke="#9a9a9a" stroke-width="0.8" opacity="1"/><line x1="309.7" y1="530.3" x2="309.7" y2="533.3" stroke="#9a9a9a" stroke-width="0.8" opacity="1"/><line x1="315.7" y1="515.1" x2="315.7" y2="518.4" stroke="#9a9a9a" stroke-width="0.8" opacity="1"/><line x1="315.7" y1="530.3" x2="315.7" y2="533.3" stroke="#9a9a9a" stroke-width="0.8" opacity="1"/><line x1="318.7" y1="515.1" x2="318.7" y2="518.4" stroke="#9a9a9a" stroke-width="0.8" opacity="1"/><line x1="318.7" y1="530.3" x2="318.7" y2="533.3" stroke="#9a9a9a" stroke-width="0.8" opacity="1"/><line x1="246.3" y1="513.1" x2="250.3" y2="513.1" stroke="#00ff00" stroke-width="2.0" stroke-dasharray="1.3,0.7" opacity="0.85"/><line x1="246.3" y1="531.3" x2="250.3" y2="531.3" stroke="#00ff00" stroke-width="2.0" stroke-dasharray="1.3,0.7" opacity="0.85"/><line x1="252.3" y1="513.1" x2="256.3" y2="513.1" stroke="#00ff00" stroke-width="2.0" stroke-dasharray="1.3,0.7" opacity="0.85"/><line x1="252.3" y1="531.3" x2="256.3" y2="531.3" stroke="#00ff00" stroke-width="2.0" stroke-dasharray="1.3,0.7" opacity="0.85"/><line x1="265.3" y1="513.1" x2="270.3" y2="513.1" stroke="#00ff00" stroke-width="2.0" stroke-dasharray="1.3,0.7" opacity="0.85"/><line x1="265.3" y1="531.3" x2="270.3" y2="531.3" stroke="#00ff00" stroke-width="2.0" stroke-dasharray="1.3,0.7" opacity="0.85"/><line x1="292.5" y1="513.1" x2="297.5" y2="513.1" stroke="#00ff00" stroke-width="2.0" stroke-dasharray="1.3,0.7" opacity="0.85"/><line x1="292.5" y1="531.3" x2="297.5" y2="531.3" stroke="#00ff00" stroke-width="2.0" stroke-dasharray="1.3,0.7" opacity="0.85"/><line x1="305.7" y1="513.1" x2="310.7" y2="513.1" stroke="#00ff00" stroke-width="2.0" stroke-dasharray="1.3,0.7" opacity="0.85"/><line x1="305.7" y1="531.3" x2="310.7" y2="531.3" stroke="#00ff00" stroke-width="2.0" stroke-dasharray="1.3,0.7" opacity="0.85"/><line x1="313.7" y1="513.1" x2="317.7" y2="513.1" stroke="#00ff00" stroke-width="2.0" stroke-dasharray="1.3,0.7" opacity="0.85"/><line x1="313.7" y1="531.3" x2="317.7" y2="531.3" stroke="#00ff00" stroke-width="2.0" stroke-dasharray="1.3,0.7" opacity="0.85"/><line x1="279.5" y1="509.6" x2="285.5" y2="509.6" stroke="#00ff00" stroke-width="2.0" stroke-dasharray="1.3,0.7" opacity="0.85"/><line x1="279.5" y1="538.5" x2="285.5" y2="538.5" stroke="#00ff00" stroke-width="2.0" stroke-dasharray="1.3,0.7" opacity="0.85"/><line x1="323.7" y1="517.4" x2="323.7" y2="533.3" stroke="#9a9a9a" stroke-width="0.9" opacity="1"/><line x1="326.7" y1="517.4" x2="326.7" y2="533.3" stroke="#9a9a9a" stroke-width="0.9" opacity="1"/><line x1="320.7" y1="522.3499999999999" x2="323.2" y2="522.3499999999999" stroke="#00ff00" stroke-width="2.0" stroke-dasharray="1.3,0.7" opacity="0.85"/><line x1="324.2" y1="525.3499999999999" x2="326.7" y2="525.3499999999999" stroke="#00ff00" stroke-width="2.0" stroke-dasharray="1.3,0.7" opacity="0.85"/><rect x="240.2" y="509.2" width="21.5" height="30.5" rx="4" stroke="#1010ff" stroke-width="1.4" fill="none" stroke-dasharray="5,3" opacity="1"/><rect x="303" y="510.5" width="26.7" height="31.1" rx="4" stroke="#1010ff" stroke-width="1.4" fill="none" stroke-dasharray="5,3" opacity="1"/><line x1="292.2" y1="498.4" x2="292.2" y2="539.7" stroke="#1010ff" stroke-width="1.4" stroke-dasharray="3,2.5" opacity="1"/><line x1="292.2" y1="498.5" x2="298" y2="498.5" stroke="#1010ff" stroke-width="1.2" opacity="1"/><path d="M261.7,511 Q263,501.6 267,501.6" stroke="#1010ff" stroke-width="1.1" fill="none" opacity="1"/><circle cx="272.3" cy="501.6" r="5" stroke="#1010ff" stroke-width="1.3" fill="none" opacity="1"/><line x1="266.8" y1="501.6" x2="277.8" y2="501.6" stroke="#ffff00" stroke-width="1.1" opacity="1"/><line x1="268.8" y1="503.90000000000003" x2="275.8" y2="503.90000000000003" stroke="#00ff00" stroke-width="2.0" stroke-dasharray="1.3,0.7" opacity="0.85"/><circle cx="303" cy="498.8" r="5" stroke="#1010ff" stroke-width="1.3" fill="none" opacity="1"/><line x1="297.5" y1="498.8" x2="308.5" y2="498.8" stroke="#ffff00" stroke-width="1.1" opacity="1"/><line x1="299.5" y1="501.1" x2="306.5" y2="501.1" stroke="#00ff00" stroke-width="2.0" stroke-dasharray="1.3,0.7" opacity="0.85"/><path d="M297,497.8 L299,494.3 M309,497.8 L307,494.3" stroke="#ff1a1a" stroke-width="0.8" fill="none" opacity="0.55"/><path d="M329.7,514 Q331,501.6 334,501.6" stroke="#1010ff" stroke-width="1.1" fill="none" opacity="1"/><circle cx="339.2" cy="501.6" r="5" stroke="#1010ff" stroke-width="1.3" fill="none" opacity="1"/><line x1="333.7" y1="501.6" x2="344.7" y2="501.6" stroke="#ffff00" stroke-width="1.1" opacity="1"/><line x1="335.7" y1="503.90000000000003" x2="342.7" y2="503.90000000000003" stroke="#00ff00" stroke-width="2.0" stroke-dasharray="1.3,0.7" opacity="0.85"/><circle cx="295" cy="553.6" r="5" stroke="#1010ff" stroke-width="1.3" fill="none" opacity="1"/><line x1="289.5" y1="553.6" x2="300.5" y2="553.6" stroke="#ffff00" stroke-width="1.1" opacity="1"/><line x1="291.5" y1="555.9" x2="298.5" y2="555.9" stroke="#00ff00" stroke-width="2.0" stroke-dasharray="1.3,0.7" opacity="0.85"/><path d="M289,552.6 L291,549.1 M301,552.6 L299,549.1" stroke="#ff1a1a" stroke-width="0.8" fill="none" opacity="0.55"/><path d="M290.5,541 L292.5,544 L294.5,541" stroke="#ff1a1a" stroke-width="0.8" fill="none" opacity="0.6"/><circle cx="245.9" cy="558.7" r="5.5" stroke="#1010ff" stroke-width="1.4" fill="none" opacity="1"/><line x1="240.4" y1="559.2" x2="251.4" y2="559.2" stroke="#1010ff" stroke-width="0.9" opacity="1"/><line x1="241.9" y1="561.2" x2="249.9" y2="561.2" stroke="#00ff00" stroke-width="2.0" stroke-dasharray="1.3,0.7" opacity="0.85"/><line x1="252.9" y1="556.4000000000001" x2="268.9" y2="556.4000000000001" stroke="#1010ff" stroke-width="2.0" stroke-dasharray="1.3,0.7" opacity="1"/><line x1="252.9" y1="558.1" x2="268.9" y2="558.1" stroke="#1010ff" stroke-width="0.8" opacity="1"/><line x1="252.9" y1="561.3000000000001" x2="262.5" y2="561.3000000000001" stroke="#00ff00" stroke-width="2.0" stroke-dasharray="1.3,0.7" opacity="0.85"/><rect x="499.5" y="461.3" width="14.600000000000001" height="14.7" rx="0" stroke="#9a9a9a" stroke-width="0.9" fill="none" stroke-dasharray="1.5,1" opacity="1"/><rect x="501.5" y="463.3" width="10.600000000000001" height="10.7" rx="0" stroke="#1010ff" stroke-width="0.8" fill="none" stroke-dasharray="3,1.5" opacity="1"/><line x1="502.5" y1="464.3" x2="502.5" y2="471.0" stroke="#ff00ff" stroke-width="1.4" opacity="1"/><rect x="504.5" y="469.0" width="6" height="2.2" fill="#ff00ff" opacity="1"/><line x1="512.6" y1="468.65000000000003" x2="514.8000000000001" y2="468.65000000000003" stroke="#00ff00" stroke-width="2.0" stroke-dasharray="1.3,0.7" opacity="0.85"/><line x1="511.9265883017365" y1="471.6221036129553" x2="514.1265883017365" y2="471.6221036129553" stroke="#00ff00" stroke-width="2.0" stroke-dasharray="1.3,0.7" opacity="0.85"/><line x1="510.0397306526394" y1="474.00554565490603" x2="512.2397306526394" y2="474.00554565490603" stroke="#00ff00" stroke-width="2.0" stroke-dasharray="1.3,0.7" opacity="0.85"/><line x1="507.3131423509029" y1="475.3282561984455" x2="509.5131423509029" y2="475.3282561984455" stroke="#00ff00" stroke-width="2.0" stroke-dasharray="1.3,0.7" opacity="0.85"/><line x1="504.2868576490971" y1="475.3282561984455" x2="506.4868576490971" y2="475.3282561984455" stroke="#00ff00" stroke-width="2.0" stroke-dasharray="1.3,0.7" opacity="0.85"/><line x1="501.56026934736065" y1="474.00554565490603" x2="503.76026934736063" y2="474.00554565490603" stroke="#00ff00" stroke-width="2.0" stroke-dasharray="1.3,0.7" opacity="0.85"/><line x1="499.6734116982636" y1="471.6221036129553" x2="501.87341169826357" y2="471.6221036129553" stroke="#00ff00" stroke-width="2.0" stroke-dasharray="1.3,0.7" opacity="0.85"/><line x1="499.0" y1="468.65000000000003" x2="501.2" y2="468.65000000000003" stroke="#00ff00" stroke-width="2.0" stroke-dasharray="1.3,0.7" opacity="0.85"/><line x1="499.6734116982636" y1="465.67789638704477" x2="501.87341169826357" y2="465.67789638704477" stroke="#00ff00" stroke-width="2.0" stroke-dasharray="1.3,0.7" opacity="0.85"/><line x1="501.56026934736065" y1="463.29445434509404" x2="503.76026934736063" y2="463.29445434509404" stroke="#00ff00" stroke-width="2.0" stroke-dasharray="1.3,0.7" opacity="0.85"/><line x1="504.28685764909704" y1="461.97174380155457" x2="506.48685764909703" y2="461.97174380155457" stroke="#00ff00" stroke-width="2.0" stroke-dasharray="1.3,0.7" opacity="0.85"/><line x1="507.3131423509029" y1="461.97174380155457" x2="509.5131423509029" y2="461.97174380155457" stroke="#00ff00" stroke-width="2.0" stroke-dasharray="1.3,0.7" opacity="0.85"/><line x1="510.0397306526394" y1="463.29445434509404" x2="512.2397306526394" y2="463.29445434509404" stroke="#00ff00" stroke-width="2.0" stroke-dasharray="1.3,0.7" opacity="0.85"/><line x1="511.9265883017365" y1="465.67789638704477" x2="514.1265883017365" y2="465.67789638704477" stroke="#00ff00" stroke-width="2.0" stroke-dasharray="1.3,0.7" opacity="0.85"/><line x1="503.8" y1="466.65000000000003" x2="509.8" y2="466.65000000000003" stroke="#00ff00" stroke-width="2.0" stroke-dasharray="1.3,0.7" opacity="0.85"/><line x1="503.8" y1="470.65000000000003" x2="509.8" y2="470.65000000000003" stroke="#00ff00" stroke-width="2.0" stroke-dasharray="1.3,0.7" opacity="0.85"/><line x1="502.5" y1="479.5" x2="509.5" y2="479.5" stroke="#00ff00" stroke-width="2.0" stroke-dasharray="1.3,0.7" opacity="0.85"/><rect x="526" y="461.3" width="15" height="14" rx="0" stroke="#9a9a9a" stroke-width="0.9" fill="none" stroke-dasharray="1.5,1" opacity="1"/><rect x="528" y="463.3" width="11" height="10" rx="0" stroke="#1010ff" stroke-width="0.8" fill="none" stroke-dasharray="3,1.5" opacity="1"/><rect x="530" y="465.3" width="7" height="6" rx="0" stroke="#ff00ff" stroke-width="1.2" fill="none" opacity="1"/><line x1="539.5" y1="468.3" x2="541.7" y2="468.3" stroke="#00ff00" stroke-width="2.0" stroke-dasharray="1.3,0.7" opacity="0.85"/><line x1="538.806782075317" y1="471.12024430426413" x2="541.006782075317" y2="471.12024430426413" stroke="#00ff00" stroke-width="2.0" stroke-dasharray="1.3,0.7" opacity="0.85"/><line x1="536.8644286130111" y1="473.3819046360422" x2="539.0644286130112" y2="473.3819046360422" stroke="#00ff00" stroke-width="2.0" stroke-dasharray="1.3,0.7" opacity="0.85"/><line x1="534.0576465376942" y1="474.6370314291819" x2="536.2576465376942" y2="474.6370314291819" stroke="#00ff00" stroke-width="2.0" stroke-dasharray="1.3,0.7" opacity="0.85"/><line x1="530.9423534623058" y1="474.6370314291819" x2="533.1423534623059" y2="474.6370314291819" stroke="#00ff00" stroke-width="2.0" stroke-dasharray="1.3,0.7" opacity="0.85"/><line x1="528.1355713869889" y1="473.3819046360422" x2="530.3355713869889" y2="473.3819046360422" stroke="#00ff00" stroke-width="2.0" stroke-dasharray="1.3,0.7" opacity="0.85"/><line x1="526.193217924683" y1="471.12024430426413" x2="528.3932179246831" y2="471.12024430426413" stroke="#00ff00" stroke-width="2.0" stroke-dasharray="1.3,0.7" opacity="0.85"/><line x1="525.5" y1="468.3" x2="527.7" y2="468.3" stroke="#00ff00" stroke-width="2.0" stroke-dasharray="1.3,0.7" opacity="0.85"/><line x1="526.193217924683" y1="465.4797556957359" x2="528.3932179246831" y2="465.4797556957359" stroke="#00ff00" stroke-width="2.0" stroke-dasharray="1.3,0.7" opacity="0.85"/><line x1="528.1355713869889" y1="463.21809536395784" x2="530.3355713869889" y2="463.21809536395784" stroke="#00ff00" stroke-width="2.0" stroke-dasharray="1.3,0.7" opacity="0.85"/><line x1="530.9423534623058" y1="461.96296857081813" x2="533.1423534623059" y2="461.96296857081813" stroke="#00ff00" stroke-width="2.0" stroke-dasharray="1.3,0.7" opacity="0.85"/><line x1="534.0576465376942" y1="461.96296857081813" x2="536.2576465376942" y2="461.96296857081813" stroke="#00ff00" stroke-width="2.0" stroke-dasharray="1.3,0.7" opacity="0.85"/><line x1="536.8644286130111" y1="463.21809536395784" x2="539.0644286130112" y2="463.21809536395784" stroke="#00ff00" stroke-width="2.0" stroke-dasharray="1.3,0.7" opacity="0.85"/><line x1="538.806782075317" y1="465.4797556957359" x2="541.006782075317" y2="465.4797556957359" stroke="#00ff00" stroke-width="2.0" stroke-dasharray="1.3,0.7" opacity="0.85"/><line x1="530.5" y1="466.3" x2="536.5" y2="466.3" stroke="#00ff00" stroke-width="2.0" stroke-dasharray="1.3,0.7" opacity="0.85"/><line x1="530.5" y1="470.3" x2="536.5" y2="470.3" stroke="#00ff00" stroke-width="2.0" stroke-dasharray="1.3,0.7" opacity="0.85"/><line x1="529" y1="478.8" x2="536" y2="478.8" stroke="#00ff00" stroke-width="2.0" stroke-dasharray="1.3,0.7" opacity="0.85"/><rect x="498.2" y="486" width="14.100000000000001" height="15" rx="0" stroke="#9a9a9a" stroke-width="0.9" fill="none" stroke-dasharray="1.5,1" opacity="1"/><rect x="500.2" y="488" width="10.100000000000001" height="11" rx="0" stroke="#1010ff" stroke-width="0.8" fill="none" stroke-dasharray="3,1.5" opacity="1"/><line x1="501.2" y1="489" x2="501.2" y2="496" stroke="#ff00ff" stroke-width="1.4" opacity="1"/><rect x="503.2" y="494" width="6" height="2.2" fill="#ff00ff" opacity="1"/><line x1="510.8" y1="493.5" x2="513.0" y2="493.5" stroke="#00ff00" stroke-width="2.0" stroke-dasharray="1.3,0.7" opacity="0.85"/><line x1="510.15134608476086" y1="496.53718617382293" x2="512.3513460847608" y2="496.53718617382293" stroke="#00ff00" stroke-width="2.0" stroke-dasharray="1.3,0.7" opacity="0.85"/><line x1="508.3338582021747" y1="498.9728203772762" x2="510.5338582021747" y2="498.9728203772762" stroke="#00ff00" stroke-width="2.0" stroke-dasharray="1.3,0.7" opacity="0.85"/><line x1="505.70751211741384" y1="500.32449538527277" x2="507.90751211741383" y2="500.32449538527277" stroke="#00ff00" stroke-width="2.0" stroke-dasharray="1.3,0.7" opacity="0.85"/><line x1="502.79248788258616" y1="500.32449538527277" x2="504.99248788258615" y2="500.32449538527277" stroke="#00ff00" stroke-width="2.0" stroke-dasharray="1.3,0.7" opacity="0.85"/><line x1="500.1661417978253" y1="498.9728203772762" x2="502.36614179782526" y2="498.9728203772762" stroke="#00ff00" stroke-width="2.0" stroke-dasharray="1.3,0.7" opacity="0.85"/><line x1="498.34865391523914" y1="496.53718617382293" x2="500.54865391523913" y2="496.53718617382293" stroke="#00ff00" stroke-width="2.0" stroke-dasharray="1.3,0.7" opacity="0.85"/><line x1="497.7" y1="493.5" x2="499.9" y2="493.5" stroke="#00ff00" stroke-width="2.0" stroke-dasharray="1.3,0.7" opacity="0.85"/><line x1="498.34865391523914" y1="490.46281382617707" x2="500.54865391523913" y2="490.46281382617707" stroke="#00ff00" stroke-width="2.0" stroke-dasharray="1.3,0.7" opacity="0.85"/><line x1="500.1661417978253" y1="488.0271796227238" x2="502.36614179782526" y2="488.0271796227238" stroke="#00ff00" stroke-width="2.0" stroke-dasharray="1.3,0.7" opacity="0.85"/><line x1="502.79248788258616" y1="486.67550461472723" x2="504.99248788258615" y2="486.67550461472723" stroke="#00ff00" stroke-width="2.0" stroke-dasharray="1.3,0.7" opacity="0.85"/><line x1="505.70751211741384" y1="486.67550461472723" x2="507.90751211741383" y2="486.67550461472723" stroke="#00ff00" stroke-width="2.0" stroke-dasharray="1.3,0.7" opacity="0.85"/><line x1="508.3338582021747" y1="488.0271796227238" x2="510.5338582021747" y2="488.0271796227238" stroke="#00ff00" stroke-width="2.0" stroke-dasharray="1.3,0.7" opacity="0.85"/><line x1="510.15134608476086" y1="490.46281382617707" x2="512.3513460847608" y2="490.46281382617707" stroke="#00ff00" stroke-width="2.0" stroke-dasharray="1.3,0.7" opacity="0.85"/><line x1="502.25" y1="491.5" x2="508.25" y2="491.5" stroke="#00ff00" stroke-width="2.0" stroke-dasharray="1.3,0.7" opacity="0.85"/><line x1="502.25" y1="495.5" x2="508.25" y2="495.5" stroke="#00ff00" stroke-width="2.0" stroke-dasharray="1.3,0.7" opacity="0.85"/><line x1="501.2" y1="504.5" x2="508.2" y2="504.5" stroke="#00ff00" stroke-width="2.0" stroke-dasharray="1.3,0.7" opacity="0.85"/><rect x="527.8" y="486" width="15.100000000000001" height="15" rx="0" stroke="#9a9a9a" stroke-width="0.9" fill="none" stroke-dasharray="1.5,1" opacity="1"/><rect x="529.8" y="488" width="11.100000000000001" height="11" rx="0" stroke="#1010ff" stroke-width="0.8" fill="none" stroke-dasharray="3,1.5" opacity="1"/><rect x="531.8" y="490" width="7.100000000000001" height="7" rx="0" stroke="#ff00ff" stroke-width="1.2" fill="none" opacity="1"/><ellipse cx="537.915" cy="493.5" rx="3" ry="5" fill="#80453a" opacity="0.7"/><line x1="541.3999999999999" y1="493.5" x2="543.5999999999999" y2="493.5" stroke="#00ff00" stroke-width="2.0" stroke-dasharray="1.3,0.7" opacity="0.85"/><line x1="540.701830518712" y1="496.53718617382293" x2="542.901830518712" y2="496.53718617382293" stroke="#00ff00" stroke-width="2.0" stroke-dasharray="1.3,0.7" opacity="0.85"/><line x1="538.745603103104" y1="498.9728203772762" x2="540.9456031031041" y2="498.9728203772762" stroke="#00ff00" stroke-width="2.0" stroke-dasharray="1.3,0.7" opacity="0.85"/><line x1="535.918772584392" y1="500.32449538527277" x2="538.118772584392" y2="500.32449538527277" stroke="#00ff00" stroke-width="2.0" stroke-dasharray="1.3,0.7" opacity="0.85"/><line x1="532.7812274156079" y1="500.32449538527277" x2="534.9812274156079" y2="500.32449538527277" stroke="#00ff00" stroke-width="2.0" stroke-dasharray="1.3,0.7" opacity="0.85"/><line x1="529.9543968968958" y1="498.9728203772762" x2="532.1543968968958" y2="498.9728203772762" stroke="#00ff00" stroke-width="2.0" stroke-dasharray="1.3,0.7" opacity="0.85"/><line x1="527.9981694812878" y1="496.53718617382293" x2="530.1981694812879" y2="496.53718617382293" stroke="#00ff00" stroke-width="2.0" stroke-dasharray="1.3,0.7" opacity="0.85"/><line x1="527.3" y1="493.5" x2="529.5" y2="493.5" stroke="#00ff00" stroke-width="2.0" stroke-dasharray="1.3,0.7" opacity="0.85"/><line x1="527.9981694812878" y1="490.46281382617707" x2="530.1981694812879" y2="490.46281382617707" stroke="#00ff00" stroke-width="2.0" stroke-dasharray="1.3,0.7" opacity="0.85"/><line x1="529.9543968968958" y1="488.0271796227238" x2="532.1543968968958" y2="488.0271796227238" stroke="#00ff00" stroke-width="2.0" stroke-dasharray="1.3,0.7" opacity="0.85"/><line x1="532.7812274156079" y1="486.67550461472723" x2="534.9812274156079" y2="486.67550461472723" stroke="#00ff00" stroke-width="2.0" stroke-dasharray="1.3,0.7" opacity="0.85"/><line x1="535.918772584392" y1="486.67550461472723" x2="538.118772584392" y2="486.67550461472723" stroke="#00ff00" stroke-width="2.0" stroke-dasharray="1.3,0.7" opacity="0.85"/><line x1="538.745603103104" y1="488.0271796227238" x2="540.9456031031041" y2="488.0271796227238" stroke="#00ff00" stroke-width="2.0" stroke-dasharray="1.3,0.7" opacity="0.85"/><line x1="540.701830518712" y1="490.46281382617707" x2="542.901830518712" y2="490.46281382617707" stroke="#00ff00" stroke-width="2.0" stroke-dasharray="1.3,0.7" opacity="0.85"/><line x1="532.3499999999999" y1="491.5" x2="538.3499999999999" y2="491.5" stroke="#00ff00" stroke-width="2.0" stroke-dasharray="1.3,0.7" opacity="0.85"/><line x1="532.3499999999999" y1="495.5" x2="538.3499999999999" y2="495.5" stroke="#00ff00" stroke-width="2.0" stroke-dasharray="1.3,0.7" opacity="0.85"/><line x1="530.8" y1="504.5" x2="537.8" y2="504.5" stroke="#00ff00" stroke-width="2.0" stroke-dasharray="1.3,0.7" opacity="0.85"/><rect x="13.5" y="458.5" width="117" height="72.5" rx="0" stroke="#1010ff" stroke-width="1.6" fill="none" opacity="1"/><line x1="50.4" y1="458.5" x2="50.4" y2="531" stroke="#1010ff" stroke-width="1.6" opacity="1"/><line x1="87.2" y1="458.5" x2="87.2" y2="531" stroke="#1010ff" stroke-width="1.6" opacity="1"/><line x1="87.2" y1="484" x2="130.5" y2="484" stroke="#1010ff" stroke-width="1.6" opacity="1"/><line x1="87.2" y1="504.3" x2="130.5" y2="504.3" stroke="#1010ff" stroke-width="1.6" opacity="1"/><line x1="110.3" y1="504.3" x2="110.3" y2="531" stroke="#1010ff" stroke-width="1.6" opacity="1"/><rect x="22.2" y="463.3" width="23.8" height="27.7" rx="0" stroke="#9a9a9a" stroke-width="0.8" fill="none" stroke-dasharray="5,1.5" opacity="1"/><rect x="29.34" y="465.3" width="10.71" height="21.7" fill="#80453a" opacity="0.45"/><clipPath id="c592"><rect x="29.34" y="465.3" width="10.71" height="21.7"/></clipPath><g clip-path="url(#c592)" stroke="#80453a" stroke-width="0.9" opacity="0.9"><line x1="29.34" y1="465.3" x2="7.640000000000001" y2="487.0"/><line x1="31.54" y1="465.3" x2="9.84" y2="487.0"/><line x1="33.74" y1="465.3" x2="12.040000000000003" y2="487.0"/><line x1="35.94" y1="465.3" x2="14.239999999999998" y2="487.0"/><line x1="38.14" y1="465.3" x2="16.44" y2="487.0"/><line x1="40.34" y1="465.3" x2="18.640000000000004" y2="487.0"/><line x1="42.54" y1="465.3" x2="20.84" y2="487.0"/><line x1="44.739999999999995" y1="465.3" x2="23.039999999999996" y2="487.0"/><line x1="46.94" y1="465.3" x2="25.24" y2="487.0"/><line x1="49.14" y1="465.3" x2="27.44" y2="487.0"/><line x1="51.339999999999996" y1="465.3" x2="29.639999999999997" y2="487.0"/><line x1="53.53999999999999" y1="465.3" x2="31.839999999999993" y2="487.0"/><line x1="55.739999999999995" y1="465.3" x2="34.03999999999999" y2="487.0"/><line x1="57.94" y1="465.3" x2="36.239999999999995" y2="487.0"/><line x1="60.13999999999999" y1="465.3" x2="38.44" y2="487.0"/></g><path d="M25.2,475.765 V486.0 Q25.2,489.0 29.2,489.0 H39.0 Q43.0,489.0 43.0,486.0 V475.765" stroke="#1010ff" stroke-width="2" fill="none" opacity="1"/><line x1="28.15" y1="466.3" x2="28.15" y2="477.15000000000003" stroke="#ff1a1a" stroke-width="1.4" opacity="1"/><line x1="41.24" y1="466.3" x2="41.24" y2="477.15000000000003" stroke="#ff1a1a" stroke-width="1.4" opacity="1"/><line x1="28.231052567862427" y1="467.47852211770874" x2="31.532921513942135" y2="467.47852211770874" stroke="#00ff00" stroke-width="2.0" stroke-dasharray="1.3,0.7" opacity="0.85"/><line x1="21.99641990935506" y1="478.1439315192953" x2="24.72779774318023" y2="478.1439315192953" stroke="#00ff00" stroke-width="2.0" stroke-dasharray="1.3,0.7" opacity="0.85"/><line x1="21.638373334412726" y1="477.35596980934696" x2="23.713364651296697" y2="477.35596980934696" stroke="#00ff00" stroke-width="2.0" stroke-dasharray="1.3,0.7" opacity="0.85"/><line x1="30.95441295482717" y1="465.23499523301695" x2="33.1358389815149" y2="465.23499523301695" stroke="#00ff00" stroke-width="2.0" stroke-dasharray="1.3,0.7" opacity="0.85"/><line x1="30.728075890734345" y1="486.2038038534155" x2="32.975679813033636" y2="486.2038038534155" stroke="#00ff00" stroke-width="2.0" stroke-dasharray="1.3,0.7" opacity="0.85"/><line x1="25.73632632225396" y1="480.67990026063484" x2="29.63174420716797" y2="480.67990026063484" stroke="#00ff00" stroke-width="2.0" stroke-dasharray="1.3,0.7" opacity="0.85"/><line x1="34.512153125713965" y1="474.2880491478266" x2="38.464663336899804" y2="474.2880491478266" stroke="#00ff00" stroke-width="2.0" stroke-dasharray="1.3,0.7" opacity="0.85"/><line x1="21.355250479320354" y1="487.0795763156484" x2="23.934469051983704" y2="487.0795763156484" stroke="#00ff00" stroke-width="2.0" stroke-dasharray="1.3,0.7" opacity="0.85"/><line x1="23.77752606726445" y1="466.56284499477084" x2="26.394489715468318" y2="466.56284499477084" stroke="#00ff00" stroke-width="2.0" stroke-dasharray="1.3,0.7" opacity="0.85"/><line x1="40.439933706176774" y1="468.30612072389306" x2="43.6031340335017" y2="468.30612072389306" stroke="#00ff00" stroke-width="2.0" stroke-dasharray="1.3,0.7" opacity="0.85"/><line x1="36.04505402936937" y1="473.61541193350274" x2="39.14054296078848" y2="473.61541193350274" stroke="#00ff00" stroke-width="2.0" stroke-dasharray="1.3,0.7" opacity="0.85"/><line x1="21.757166579338413" y1="464.95095240806467" x2="24.169084004977066" y2="464.95095240806467" stroke="#00ff00" stroke-width="2.0" stroke-dasharray="1.3,0.7" opacity="0.85"/><line x1="15.2" y1="475.765" x2="21.2" y2="475.765" stroke="#00ff00" stroke-width="2.0" stroke-dasharray="1.3,0.7" opacity="0.85"/><line x1="24" y1="495" x2="38" y2="495" stroke="#1010ff" stroke-width="2.0" stroke-dasharray="1.3,0.7" opacity="0.85"/><line x1="24" y1="497" x2="40" y2="497" stroke="#1010ff" stroke-width="0.8" opacity="1"/><rect x="54" y="463.3" width="23.4" height="29.3" rx="0" stroke="#9a9a9a" stroke-width="0.8" fill="none" stroke-dasharray="5,1.5" opacity="1"/><rect x="61.019999999999996" y="465.3" width="10.53" height="23.3" fill="#80453a" opacity="0.45"/><clipPath id="c629"><rect x="61.019999999999996" y="465.3" width="10.53" height="23.3"/></clipPath><g clip-path="url(#c629)" stroke="#80453a" stroke-width="0.9" opacity="0.9"><line x1="61.019999999999996" y1="465.3" x2="37.72" y2="488.6"/><line x1="63.22" y1="465.3" x2="39.92" y2="488.6"/><line x1="65.42" y1="465.3" x2="42.120000000000005" y2="488.6"/><line x1="67.61999999999999" y1="465.3" x2="44.31999999999999" y2="488.6"/><line x1="69.82" y1="465.3" x2="46.519999999999996" y2="488.6"/><line x1="72.02" y1="465.3" x2="48.72" y2="488.6"/><line x1="74.22" y1="465.3" x2="50.92" y2="488.6"/><line x1="76.41999999999999" y1="465.3" x2="53.11999999999999" y2="488.6"/><line x1="78.61999999999999" y1="465.3" x2="55.31999999999999" y2="488.6"/><line x1="80.82" y1="465.3" x2="57.519999999999996" y2="488.6"/><line x1="83.02" y1="465.3" x2="59.72" y2="488.6"/><line x1="85.22" y1="465.3" x2="61.92" y2="488.6"/><line x1="87.41999999999999" y1="465.3" x2="64.11999999999999" y2="488.6"/><line x1="89.61999999999999" y1="465.3" x2="66.32" y2="488.6"/><line x1="91.82" y1="465.3" x2="68.52" y2="488.6"/><line x1="94.01999999999998" y1="465.3" x2="70.71999999999998" y2="488.6"/></g><path d="M57,476.485 V487.6 Q57,490.6 61,490.6 H70.4 Q74.4,490.6 74.4,487.6 V476.485" stroke="#1010ff" stroke-width="2" fill="none" opacity="1"/><line x1="59.85" y1="466.3" x2="59.85" y2="477.95" stroke="#ff1a1a" stroke-width="1.4" opacity="1"/><line x1="72.72" y1="466.3" x2="72.72" y2="477.95" stroke="#ff1a1a" stroke-width="1.4" opacity="1"/><line x1="68.60175934563557" y1="475.8284545561135" x2="71.23005368638916" y2="475.8284545561135" stroke="#00ff00" stroke-width="2.0" stroke-dasharray="1.3,0.7" opacity="0.85"/><line x1="66.28770946958639" y1="476.57830222766376" x2="68.88724346331375" y2="476.57830222766376" stroke="#00ff00" stroke-width="2.0" stroke-dasharray="1.3,0.7" opacity="0.85"/><line x1="71.38285934914879" y1="483.7805369082765" x2="73.87105237059309" y2="483.7805369082765" stroke="#00ff00" stroke-width="2.0" stroke-dasharray="1.3,0.7" opacity="0.85"/><line x1="66.01593853031157" y1="478.6882575616755" x2="69.76621352145843" y2="478.6882575616755" stroke="#00ff00" stroke-width="2.0" stroke-dasharray="1.3,0.7" opacity="0.85"/><line x1="69.79846506231691" y1="471.73657651128246" x2="73.75881475730208" y2="471.73657651128246" stroke="#00ff00" stroke-width="2.0" stroke-dasharray="1.3,0.7" opacity="0.85"/><line x1="54.88080498942107" y1="475.55099867830717" x2="58.39508684855157" y2="475.55099867830717" stroke="#00ff00" stroke-width="2.0" stroke-dasharray="1.3,0.7" opacity="0.85"/><line x1="55.70842264571632" y1="477.6266188439411" x2="57.78683715981119" y2="477.6266188439411" stroke="#00ff00" stroke-width="2.0" stroke-dasharray="1.3,0.7" opacity="0.85"/><line x1="68.30446689943923" y1="485.70192638003545" x2="71.450518779994" y2="485.70192638003545" stroke="#00ff00" stroke-width="2.0" stroke-dasharray="1.3,0.7" opacity="0.85"/><line x1="73.36165860867368" y1="472.49280212644925" x2="76.752249341221" y2="472.49280212644925" stroke="#00ff00" stroke-width="2.0" stroke-dasharray="1.3,0.7" opacity="0.85"/><line x1="66.50262500136245" y1="480.290929485477" x2="69.41503566396527" y2="480.290929485477" stroke="#00ff00" stroke-width="2.0" stroke-dasharray="1.3,0.7" opacity="0.85"/><line x1="72.49521384450601" y1="490.97915608666256" x2="75.4434105193453" y2="490.97915608666256" stroke="#00ff00" stroke-width="2.0" stroke-dasharray="1.3,0.7" opacity="0.85"/><line x1="68.20531381358205" y1="465.0776142285986" x2="71.6082978561909" y2="465.0776142285986" stroke="#00ff00" stroke-width="2.0" stroke-dasharray="1.3,0.7" opacity="0.85"/><line x1="47" y1="476.485" x2="53" y2="476.485" stroke="#00ff00" stroke-width="2.0" stroke-dasharray="1.3,0.7" opacity="0.85"/><line x1="58" y1="496.5" x2="72" y2="496.5" stroke="#1010ff" stroke-width="2.0" stroke-dasharray="1.3,0.7" opacity="0.85"/><line x1="58" y1="498.5" x2="73" y2="498.5" stroke="#1010ff" stroke-width="0.8" opacity="1"/><rect x="17.5" y="503.5" width="27" height="19.5" rx="0" stroke="#9a9a9a" stroke-width="0.8" fill="none" stroke-dasharray="5,1.5" opacity="1"/><rect x="20.5" y="508.5" width="18.599999999999998" height="9.5" fill="#80453a" opacity="0.45"/><clipPath id="c667"><rect x="20.5" y="508.5" width="18.599999999999998" height="9.5"/></clipPath><g clip-path="url(#c667)" stroke="#80453a" stroke-width="0.9" opacity="0.9"><line x1="20.5" y1="508.5" x2="11.0" y2="518.0"/><line x1="22.7" y1="508.5" x2="13.2" y2="518.0"/><line x1="24.9" y1="508.5" x2="15.399999999999999" y2="518.0"/><line x1="27.1" y1="508.5" x2="17.6" y2="518.0"/><line x1="29.3" y1="508.5" x2="19.8" y2="518.0"/><line x1="31.5" y1="508.5" x2="22.0" y2="518.0"/><line x1="33.7" y1="508.5" x2="24.200000000000003" y2="518.0"/><line x1="35.9" y1="508.5" x2="26.4" y2="518.0"/><line x1="38.099999999999994" y1="508.5" x2="28.599999999999994" y2="518.0"/><line x1="40.3" y1="508.5" x2="30.799999999999997" y2="518.0"/><line x1="42.5" y1="508.5" x2="33.0" y2="518.0"/><line x1="44.699999999999996" y1="508.5" x2="35.199999999999996" y2="518.0"/><line x1="46.89999999999999" y1="508.5" x2="37.39999999999999" y2="518.0"/></g><line x1="21.5" y1="506.5" x2="32.55" y2="506.5" stroke="#ff1a1a" stroke-width="1.6" opacity="1"/><line x1="21.5" y1="520.0" x2="32.55" y2="520.0" stroke="#ff1a1a" stroke-width="1.6" opacity="1"/><line x1="21.5" y1="508.5" x2="40.5" y2="508.5" stroke="#1010ff" stroke-width="1.2" opacity="1"/><line x1="21.5" y1="518.0" x2="40.5" y2="518.0" stroke="#1010ff" stroke-width="1.2" opacity="1"/><path d="M35.650000000000006,505.5 Q44.5,505.5 44.5,513.25 Q44.5,521.0 35.650000000000006,521.0" stroke="#1010ff" stroke-width="1.5" fill="none" opacity="1"/><line x1="34.56099449035773" y1="523.8515626985327" x2="38.204844063577156" y2="523.8515626985327" stroke="#00ff00" stroke-width="2.0" stroke-dasharray="1.3,0.7" opacity="0.85"/><line x1="23.322461494918628" y1="510.7945160126043" x2="26.659766926687006" y2="510.7945160126043" stroke="#00ff00" stroke-width="2.0" stroke-dasharray="1.3,0.7" opacity="0.85"/><line x1="15.199450769723246" y1="512.4264486554449" x2="17.535547527536334" y2="512.4264486554449" stroke="#00ff00" stroke-width="2.0" stroke-dasharray="1.3,0.7" opacity="0.85"/><line x1="18.12996962893369" y1="503.7675200156232" x2="21.666435605878732" y2="503.7675200156232" stroke="#00ff00" stroke-width="2.0" stroke-dasharray="1.3,0.7" opacity="0.85"/><line x1="18.50954688257921" y1="507.82371892448367" x2="21.291446288845666" y2="507.82371892448367" stroke="#00ff00" stroke-width="2.0" stroke-dasharray="1.3,0.7" opacity="0.85"/><line x1="41.51408119791528" y1="504.23249797580297" x2="44.41245599981394" y2="504.23249797580297" stroke="#00ff00" stroke-width="2.0" stroke-dasharray="1.3,0.7" opacity="0.85"/><line x1="31.53263718346516" y1="521.4927522684925" x2="35.17119685913664" y2="521.4927522684925" stroke="#00ff00" stroke-width="2.0" stroke-dasharray="1.3,0.7" opacity="0.85"/><line x1="41.283518560653974" y1="508.4860528870488" x2="44.11411159507737" y2="508.4860528870488" stroke="#00ff00" stroke-width="2.0" stroke-dasharray="1.3,0.7" opacity="0.85"/><line x1="25.62190612528037" y1="521.5101457847617" x2="29.53736853320835" y2="521.5101457847617" stroke="#00ff00" stroke-width="2.0" stroke-dasharray="1.3,0.7" opacity="0.85"/><line x1="19.178548079524376" y1="506.28868116254296" x2="21.642461813163447" y2="506.28868116254296" stroke="#00ff00" stroke-width="2.0" stroke-dasharray="1.3,0.7" opacity="0.85"/><line x1="21.733418594106695" y1="512.9266987023392" x2="24.911665601571208" y2="512.9266987023392" stroke="#00ff00" stroke-width="2.0" stroke-dasharray="1.3,0.7" opacity="0.85"/><line x1="22.645145198254674" y1="502.58801247277887" x2="25.48303820050533" y2="502.58801247277887" stroke="#00ff00" stroke-width="2.0" stroke-dasharray="1.3,0.7" opacity="0.85"/><line x1="25.946860759736488" y1="514.6763363096874" x2="29.85305661078668" y2="514.6763363096874" stroke="#00ff00" stroke-width="2.0" stroke-dasharray="1.3,0.7" opacity="0.85"/><line x1="35.90530337121531" y1="513.5830658110217" x2="39.140488870033565" y2="513.5830658110217" stroke="#00ff00" stroke-width="2.0" stroke-dasharray="1.3,0.7" opacity="0.85"/><line x1="22" y1="527.5" x2="36" y2="527.5" stroke="#1010ff" stroke-width="2.0" stroke-dasharray="1.3,0.7" opacity="0.85"/><rect x="56.8" y="503.5" width="24.7" height="19.5" rx="0" stroke="#9a9a9a" stroke-width="0.8" fill="none" stroke-dasharray="5,1.5" opacity="1"/><rect x="59.8" y="508.5" width="17.22" height="9.5" fill="#80453a" opacity="0.45"/><clipPath id="c704"><rect x="59.8" y="508.5" width="17.22" height="9.5"/></clipPath><g clip-path="url(#c704)" stroke="#80453a" stroke-width="0.9" opacity="0.9"><line x1="59.8" y1="508.5" x2="50.3" y2="518.0"/><line x1="62.0" y1="508.5" x2="52.5" y2="518.0"/><line x1="64.2" y1="508.5" x2="54.7" y2="518.0"/><line x1="66.39999999999999" y1="508.5" x2="56.89999999999999" y2="518.0"/><line x1="68.6" y1="508.5" x2="59.099999999999994" y2="518.0"/><line x1="70.8" y1="508.5" x2="61.3" y2="518.0"/><line x1="73.0" y1="508.5" x2="63.5" y2="518.0"/><line x1="75.19999999999999" y1="508.5" x2="65.69999999999999" y2="518.0"/><line x1="77.39999999999999" y1="508.5" x2="67.89999999999999" y2="518.0"/><line x1="79.6" y1="508.5" x2="70.1" y2="518.0"/><line x1="81.8" y1="508.5" x2="72.3" y2="518.0"/><line x1="84.0" y1="508.5" x2="74.5" y2="518.0"/><line x1="86.19999999999999" y1="508.5" x2="76.69999999999999" y2="518.0"/></g><line x1="60.8" y1="506.5" x2="70.585" y2="506.5" stroke="#ff1a1a" stroke-width="1.6" opacity="1"/><line x1="60.8" y1="520.0" x2="70.585" y2="520.0" stroke="#ff1a1a" stroke-width="1.6" opacity="1"/><line x1="60.8" y1="508.5" x2="77.5" y2="508.5" stroke="#1010ff" stroke-width="1.2" opacity="1"/><line x1="60.8" y1="518.0" x2="77.5" y2="518.0" stroke="#1010ff" stroke-width="1.2" opacity="1"/><path d="M73.455,505.5 Q81.5,505.5 81.5,513.25 Q81.5,521.0 73.455,521.0" stroke="#1010ff" stroke-width="1.5" fill="none" opacity="1"/><line x1="73.2069423663007" y1="503.6608472043115" x2="77.0060083864166" y2="503.6608472043115" stroke="#00ff00" stroke-width="2.0" stroke-dasharray="1.3,0.7" opacity="0.85"/><line x1="76.18512438326428" y1="521.3020334588913" x2="79.78087062565741" y2="521.3020334588913" stroke="#00ff00" stroke-width="2.0" stroke-dasharray="1.3,0.7" opacity="0.85"/><line x1="65.06127462777941" y1="511.07804489488586" x2="67.26834881520006" y2="511.07804489488586" stroke="#00ff00" stroke-width="2.0" stroke-dasharray="1.3,0.7" opacity="0.85"/><line x1="72.00411053517985" y1="503.8383281648018" x2="74.1388057668659" y2="503.8383281648018" stroke="#00ff00" stroke-width="2.0" stroke-dasharray="1.3,0.7" opacity="0.85"/><line x1="59.79150342230491" y1="505.9895185371001" x2="62.4716107267696" y2="505.9895185371001" stroke="#00ff00" stroke-width="2.0" stroke-dasharray="1.3,0.7" opacity="0.85"/><line x1="55.308919831650655" y1="502.50501556087914" x2="57.61144969620951" y2="502.50501556087914" stroke="#00ff00" stroke-width="2.0" stroke-dasharray="1.3,0.7" opacity="0.85"/><line x1="56.71202736224852" y1="510.3176133237433" x2="58.76302913558081" y2="510.3176133237433" stroke="#00ff00" stroke-width="2.0" stroke-dasharray="1.3,0.7" opacity="0.85"/><line x1="78.89333923062861" y1="515.7024832374523" x2="81.1904402012904" y2="515.7024832374523" stroke="#00ff00" stroke-width="2.0" stroke-dasharray="1.3,0.7" opacity="0.85"/><line x1="61.039797613188114" y1="509.9688752401546" x2="63.76812449224468" y2="509.9688752401546" stroke="#00ff00" stroke-width="2.0" stroke-dasharray="1.3,0.7" opacity="0.85"/><line x1="57.325572022874994" y1="520.7521439194193" x2="61.31177746628442" y2="520.7521439194193" stroke="#00ff00" stroke-width="2.0" stroke-dasharray="1.3,0.7" opacity="0.85"/><line x1="67.1738974778901" y1="512.9024451129497" x2="69.34566680100242" y2="512.9024451129497" stroke="#00ff00" stroke-width="2.0" stroke-dasharray="1.3,0.7" opacity="0.85"/><line x1="56.73278460067243" y1="509.8666705222245" x2="59.26229838410679" y2="509.8666705222245" stroke="#00ff00" stroke-width="2.0" stroke-dasharray="1.3,0.7" opacity="0.85"/><line x1="77.58814935208878" y1="505.97093012631825" x2="79.63434079417928" y2="505.97093012631825" stroke="#00ff00" stroke-width="2.0" stroke-dasharray="1.3,0.7" opacity="0.85"/><line x1="81.09328594150395" y1="513.8575339934057" x2="83.38649101930213" y2="513.8575339934057" stroke="#00ff00" stroke-width="2.0" stroke-dasharray="1.3,0.7" opacity="0.85"/><line x1="62" y1="528.5" x2="74" y2="528.5" stroke="#1010ff" stroke-width="2.0" stroke-dasharray="1.3,0.7" opacity="0.85"/><rect x="92" y="465" width="7" height="12" rx="4.5" stroke="#9a9a9a" stroke-width="0.9" fill="none" opacity="1"/><rect x="93.5" y="467" width="4" height="8" rx="3.0" stroke="#1010ff" stroke-width="1.2" fill="none" opacity="1"/><rect x="92" y="470.0" width="7" height="2.5" fill="#80453a" opacity="0.7"/><line x1="98.5" y1="471.0" x2="100.5" y2="471.0" stroke="#00ff00" stroke-width="2.0" stroke-dasharray="1.3,0.7" opacity="0.85"/><line x1="97.32842712474618" y1="475.59619407771254" x2="99.32842712474618" y2="475.59619407771254" stroke="#00ff00" stroke-width="2.0" stroke-dasharray="1.3,0.7" opacity="0.85"/><line x1="94.5" y1="477.5" x2="96.5" y2="477.5" stroke="#00ff00" stroke-width="2.0" stroke-dasharray="1.3,0.7" opacity="0.85"/><line x1="91.67157287525382" y1="475.59619407771254" x2="93.67157287525382" y2="475.59619407771254" stroke="#00ff00" stroke-width="2.0" stroke-dasharray="1.3,0.7" opacity="0.85"/><line x1="90.5" y1="471.0" x2="92.5" y2="471.0" stroke="#00ff00" stroke-width="2.0" stroke-dasharray="1.3,0.7" opacity="0.85"/><line x1="91.67157287525382" y1="466.40380592228746" x2="93.67157287525382" y2="466.40380592228746" stroke="#00ff00" stroke-width="2.0" stroke-dasharray="1.3,0.7" opacity="0.85"/><line x1="94.5" y1="464.5" x2="96.5" y2="464.5" stroke="#00ff00" stroke-width="2.0" stroke-dasharray="1.3,0.7" opacity="0.85"/><line x1="97.32842712474618" y1="466.40380592228746" x2="99.32842712474618" y2="466.40380592228746" stroke="#00ff00" stroke-width="2.0" stroke-dasharray="1.3,0.7" opacity="0.85"/><line x1="92" y1="481" x2="101" y2="481" stroke="#1010ff" stroke-width="2.0" stroke-dasharray="1.3,0.7" opacity="0.85"/><rect x="105.6" y="465" width="7" height="12" rx="4.5" stroke="#9a9a9a" stroke-width="0.9" fill="none" opacity="1"/><rect x="107.1" y="467" width="4" height="8" rx="3.0" stroke="#1010ff" stroke-width="1.2" fill="none" opacity="1"/><rect x="105.6" y="470.0" width="7" height="2.5" fill="#80453a" opacity="0.7"/><line x1="112.1" y1="471.0" x2="114.1" y2="471.0" stroke="#00ff00" stroke-width="2.0" stroke-dasharray="1.3,0.7" opacity="0.85"/><line x1="110.92842712474618" y1="475.59619407771254" x2="112.92842712474618" y2="475.59619407771254" stroke="#00ff00" stroke-width="2.0" stroke-dasharray="1.3,0.7" opacity="0.85"/><line x1="108.1" y1="477.5" x2="110.1" y2="477.5" stroke="#00ff00" stroke-width="2.0" stroke-dasharray="1.3,0.7" opacity="0.85"/><line x1="105.27157287525381" y1="475.59619407771254" x2="107.27157287525381" y2="475.59619407771254" stroke="#00ff00" stroke-width="2.0" stroke-dasharray="1.3,0.7" opacity="0.85"/><line x1="104.1" y1="471.0" x2="106.1" y2="471.0" stroke="#00ff00" stroke-width="2.0" stroke-dasharray="1.3,0.7" opacity="0.85"/><line x1="105.27157287525381" y1="466.40380592228746" x2="107.27157287525381" y2="466.40380592228746" stroke="#00ff00" stroke-width="2.0" stroke-dasharray="1.3,0.7" opacity="0.85"/><line x1="108.1" y1="464.5" x2="110.1" y2="464.5" stroke="#00ff00" stroke-width="2.0" stroke-dasharray="1.3,0.7" opacity="0.85"/><line x1="110.92842712474618" y1="466.40380592228746" x2="112.92842712474618" y2="466.40380592228746" stroke="#00ff00" stroke-width="2.0" stroke-dasharray="1.3,0.7" opacity="0.85"/><line x1="105.6" y1="481" x2="114.6" y2="481" stroke="#1010ff" stroke-width="2.0" stroke-dasharray="1.3,0.7" opacity="0.85"/><rect x="117.6" y="465" width="7" height="12" rx="4.5" stroke="#9a9a9a" stroke-width="0.9" fill="none" opacity="1"/><rect x="119.1" y="467" width="4" height="8" rx="3.0" stroke="#1010ff" stroke-width="1.2" fill="none" opacity="1"/><rect x="117.6" y="470.0" width="7" height="2.5" fill="#80453a" opacity="0.7"/><line x1="124.1" y1="471.0" x2="126.1" y2="471.0" stroke="#00ff00" stroke-width="2.0" stroke-dasharray="1.3,0.7" opacity="0.85"/><line x1="122.92842712474618" y1="475.59619407771254" x2="124.92842712474618" y2="475.59619407771254" stroke="#00ff00" stroke-width="2.0" stroke-dasharray="1.3,0.7" opacity="0.85"/><line x1="120.1" y1="477.5" x2="122.1" y2="477.5" stroke="#00ff00" stroke-width="2.0" stroke-dasharray="1.3,0.7" opacity="0.85"/><line x1="117.27157287525381" y1="475.59619407771254" x2="119.27157287525381" y2="475.59619407771254" stroke="#00ff00" stroke-width="2.0" stroke-dasharray="1.3,0.7" opacity="0.85"/><line x1="116.1" y1="471.0" x2="118.1" y2="471.0" stroke="#00ff00" stroke-width="2.0" stroke-dasharray="1.3,0.7" opacity="0.85"/><line x1="117.27157287525381" y1="466.40380592228746" x2="119.27157287525381" y2="466.40380592228746" stroke="#00ff00" stroke-width="2.0" stroke-dasharray="1.3,0.7" opacity="0.85"/><line x1="120.1" y1="464.5" x2="122.1" y2="464.5" stroke="#00ff00" stroke-width="2.0" stroke-dasharray="1.3,0.7" opacity="0.85"/><line x1="122.92842712474618" y1="466.40380592228746" x2="124.92842712474618" y2="466.40380592228746" stroke="#00ff00" stroke-width="2.0" stroke-dasharray="1.3,0.7" opacity="0.85"/><line x1="117.6" y1="481" x2="126.6" y2="481" stroke="#1010ff" stroke-width="2.0" stroke-dasharray="1.3,0.7" opacity="0.85"/><rect x="91" y="489.7" width="13.8" height="6.300000000000001" rx="0" stroke="#9a9a9a" stroke-width="0.9" fill="none" opacity="1"/><rect x="93" y="490.7" width="9.8" height="4.300000000000001" fill="#80453a" opacity="0.6"/><line x1="92" y1="490.7" x2="103.8" y2="490.7" stroke="#1010ff" stroke-width="1.2" opacity="1"/><line x1="92" y1="495.0" x2="103.8" y2="495.0" stroke="#1010ff" stroke-width="1.2" opacity="1"/><line x1="97.03895190305529" y1="488.92445267880396" x2="99.53895190305529" y2="488.92445267880396" stroke="#00ff00" stroke-width="2.0" stroke-dasharray="1.3,0.7" opacity="0.85"/><line x1="96.81601972588693" y1="496.8215603145675" x2="99.31601972588693" y2="496.8215603145675" stroke="#00ff00" stroke-width="2.0" stroke-dasharray="1.3,0.7" opacity="0.85"/><line x1="101.7772104482871" y1="494.4784333230347" x2="104.2772104482871" y2="494.4784333230347" stroke="#00ff00" stroke-width="2.0" stroke-dasharray="1.3,0.7" opacity="0.85"/><line x1="92.86450491899456" y1="491.74360827161775" x2="95.36450491899456" y2="491.74360827161775" stroke="#00ff00" stroke-width="2.0" stroke-dasharray="1.3,0.7" opacity="0.85"/><line x1="91.47222211110818" y1="495.10708463973685" x2="93.97222211110818" y2="495.10708463973685" stroke="#00ff00" stroke-width="2.0" stroke-dasharray="1.3,0.7" opacity="0.85"/><line x1="96.88236748289461" y1="495.16615559810685" x2="99.38236748289461" y2="495.16615559810685" stroke="#00ff00" stroke-width="2.0" stroke-dasharray="1.3,0.7" opacity="0.85"/><line x1="93.87904192670689" y1="490.5512458867564" x2="96.37904192670689" y2="490.5512458867564" stroke="#00ff00" stroke-width="2.0" stroke-dasharray="1.3,0.7" opacity="0.85"/><line x1="101.0103664522492" y1="496.8748862199044" x2="103.5103664522492" y2="496.8748862199044" stroke="#00ff00" stroke-width="2.0" stroke-dasharray="1.3,0.7" opacity="0.85"/><line x1="90" y1="499.5" x2="104" y2="499.5" stroke="#1010ff" stroke-width="2.0" stroke-dasharray="1.3,0.7" opacity="0.85"/><rect x="112" y="489.7" width="13" height="6.300000000000001" rx="0" stroke="#9a9a9a" stroke-width="0.9" fill="none" opacity="1"/><rect x="114" y="490.7" width="9" height="4.300000000000001" fill="#80453a" opacity="0.6"/><line x1="113" y1="490.7" x2="124" y2="490.7" stroke="#1010ff" stroke-width="1.2" opacity="1"/><line x1="113" y1="495.0" x2="124" y2="495.0" stroke="#1010ff" stroke-width="1.2" opacity="1"/><line x1="121.93680318245325" y1="495.39045225372104" x2="124.43680318245325" y2="495.39045225372104" stroke="#00ff00" stroke-width="2.0" stroke-dasharray="1.3,0.7" opacity="0.85"/><line x1="121.45666120655522" y1="494.84094606911844" x2="123.95666120655522" y2="494.84094606911844" stroke="#00ff00" stroke-width="2.0" stroke-dasharray="1.3,0.7" opacity="0.85"/><line x1="113.17435286044218" y1="492.9964014112211" x2="115.67435286044218" y2="492.9964014112211" stroke="#00ff00" stroke-width="2.0" stroke-dasharray="1.3,0.7" opacity="0.85"/><line x1="114.97787560696942" y1="488.94053525115334" x2="117.47787560696942" y2="488.94053525115334" stroke="#00ff00" stroke-width="2.0" stroke-dasharray="1.3,0.7" opacity="0.85"/><line x1="110.3911190559089" y1="491.0191738741069" x2="112.8911190559089" y2="491.0191738741069" stroke="#00ff00" stroke-width="2.0" stroke-dasharray="1.3,0.7" opacity="0.85"/><line x1="113.62844108574859" y1="494.447932116111" x2="116.12844108574859" y2="494.447932116111" stroke="#00ff00" stroke-width="2.0" stroke-dasharray="1.3,0.7" opacity="0.85"/><line x1="123.39121106877873" y1="492.4119897254638" x2="125.89121106877873" y2="492.4119897254638" stroke="#00ff00" stroke-width="2.0" stroke-dasharray="1.3,0.7" opacity="0.85"/><line x1="123.11829681786739" y1="496.9007158830837" x2="125.61829681786739" y2="496.9007158830837" stroke="#00ff00" stroke-width="2.0" stroke-dasharray="1.3,0.7" opacity="0.85"/><line x1="112" y1="501" x2="126" y2="501" stroke="#1010ff" stroke-width="2.0" stroke-dasharray="1.3,0.7" opacity="0.85"/><rect x="93.5" y="508" width="5.5" height="11.5" rx="3.75" stroke="#9a9a9a" stroke-width="0.9" fill="none" opacity="1"/><rect x="95.0" y="510" width="2.5" height="7.5" rx="2.5" stroke="#1010ff" stroke-width="1.2" fill="none" opacity="1"/><rect x="93.5" y="512.75" width="5.5" height="2.5" fill="#80453a" opacity="0.7"/><line x1="98.5" y1="513.75" x2="100.5" y2="513.75" stroke="#00ff00" stroke-width="2.0" stroke-dasharray="1.3,0.7" opacity="0.85"/><line x1="97.54809703885628" y1="518.1694173824159" x2="99.54809703885628" y2="518.1694173824159" stroke="#00ff00" stroke-width="2.0" stroke-dasharray="1.3,0.7" opacity="0.85"/><line x1="95.25" y1="520.0" x2="97.25" y2="520.0" stroke="#00ff00" stroke-width="2.0" stroke-dasharray="1.3,0.7" opacity="0.85"/><line x1="92.95190296114372" y1="518.1694173824159" x2="94.95190296114372" y2="518.1694173824159" stroke="#00ff00" stroke-width="2.0" stroke-dasharray="1.3,0.7" opacity="0.85"/><line x1="92.0" y1="513.75" x2="94.0" y2="513.75" stroke="#00ff00" stroke-width="2.0" stroke-dasharray="1.3,0.7" opacity="0.85"/><line x1="92.95190296114372" y1="509.33058261758407" x2="94.95190296114372" y2="509.33058261758407" stroke="#00ff00" stroke-width="2.0" stroke-dasharray="1.3,0.7" opacity="0.85"/><line x1="95.25" y1="507.5" x2="97.25" y2="507.5" stroke="#00ff00" stroke-width="2.0" stroke-dasharray="1.3,0.7" opacity="0.85"/><line x1="97.54809703885628" y1="509.33058261758407" x2="99.54809703885628" y2="509.33058261758407" stroke="#00ff00" stroke-width="2.0" stroke-dasharray="1.3,0.7" opacity="0.85"/><line x1="91" y1="524" x2="105" y2="524" stroke="#1010ff" stroke-width="2.0" stroke-dasharray="1.3,0.7" opacity="0.85"/><rect x="118" y="510.7" width="4.6" height="8" rx="3.3" stroke="#9a9a9a" stroke-width="0.9" fill="none" opacity="1"/><rect x="119.5" y="512.7" width="1.5999999999999996" height="4" rx="2.1999999999999997" stroke="#1010ff" stroke-width="1.2" fill="none" opacity="1"/><rect x="118" y="513.7" width="4.6" height="2.5" fill="#80453a" opacity="0.7"/><line x1="122.1" y1="514.7" x2="124.1" y2="514.7" stroke="#00ff00" stroke-width="2.0" stroke-dasharray="1.3,0.7" opacity="0.85"/><line x1="121.27989898732233" y1="517.8819805153395" x2="123.27989898732233" y2="517.8819805153395" stroke="#00ff00" stroke-width="2.0" stroke-dasharray="1.3,0.7" opacity="0.85"/><line x1="119.3" y1="519.2" x2="121.3" y2="519.2" stroke="#00ff00" stroke-width="2.0" stroke-dasharray="1.3,0.7" opacity="0.85"/><line x1="117.32010101267767" y1="517.8819805153395" x2="119.32010101267767" y2="517.8819805153395" stroke="#00ff00" stroke-width="2.0" stroke-dasharray="1.3,0.7" opacity="0.85"/><line x1="116.5" y1="514.7" x2="118.5" y2="514.7" stroke="#00ff00" stroke-width="2.0" stroke-dasharray="1.3,0.7" opacity="0.85"/><line x1="117.32010101267767" y1="511.51801948466056" x2="119.32010101267767" y2="511.51801948466056" stroke="#00ff00" stroke-width="2.0" stroke-dasharray="1.3,0.7" opacity="0.85"/><line x1="119.3" y1="510.20000000000005" x2="121.3" y2="510.20000000000005" stroke="#00ff00" stroke-width="2.0" stroke-dasharray="1.3,0.7" opacity="0.85"/><line x1="121.27989898732233" y1="511.51801948466056" x2="123.27989898732233" y2="511.51801948466056" stroke="#00ff00" stroke-width="2.0" stroke-dasharray="1.3,0.7" opacity="0.85"/><line x1="115" y1="524" x2="128" y2="524" stroke="#1010ff" stroke-width="2.0" stroke-dasharray="1.3,0.7" opacity="0.85"/></svg><div class="a" style="left:953px;top:199px;width:10px;height:3px;background:#f0f0f0"></div><svg class="a" style="left:973px;top:194px;overflow:visible;" width="11" height="10" viewBox="0 0 11 10"><rect x="1" y="3.5" width="6.5" height="6" fill="none" stroke="#f0f0f0" stroke-width="1.6"/><path d="M3.5,3 V0.8 H10 V7 H7.5" fill="none" stroke="#f0f0f0" stroke-width="1.4"/></svg><svg class="a" style="left:993px;top:194px;overflow:visible;" width="10" height="9" viewBox="0 0 10 9"><path d="M1,1 L9,8.5 M9,1 L1,8.5" stroke="#f4f4f4" stroke-width="2"/></svg><svg class="a" style="left:0px;top:0px;overflow:visible;" width="1" height="1" viewBox="0 0 1 1"><circle cx="954" cy="266" r="38.5" fill="none" stroke="#4a5058" stroke-width="9"/><rect x="935" y="247" width="38" height="38" fill="#bebebe"/><rect x="943" y="255" width="22" height="22" fill="#adadad"/><text x="946.3" y="269.7" font-family="Liberation Sans" font-weight="700" font-size="10" fill="#4a4a4a" textLength="15.7" lengthAdjust="spacingAndGlyphs">TOP</text><g font-family="Liberation Sans" font-weight="700" font-size="14" fill="#b8b8b8" text-anchor="middle"><text x="954" y="232">N</text><text x="954" y="312">S</text><text x="913.5" y="271">W</text><text x="994.5" y="271">E</text></g><rect x="929.5" y="329.5" width="47" height="16" rx="4" fill="#8e8e8e" stroke="#6e6e6e"/><text x="933.4" y="340.5" font-family="Liberation Sans" font-size="10" fill="#505050" textLength="23.6" lengthAdjust="spacingAndGlyphs">WCS</text><path d="M963,335 H970 L966.5,339 Z" fill="none" stroke="#666" stroke-width="0.8"/></svg><svg class="a" style="left:0px;top:0px;overflow:visible;" width="1" height="1" viewBox="0 0 1 1"><rect x="978.5" y="372" width="31" height="212" rx="4" fill="#5a6068" stroke="#6a7078" stroke-width="0.8"/><g fill="none" stroke="#3e4349" stroke-width="1.6"><path d="M994,390.5 A10.5,10.5 0 1 0 1004.5,401 V390.5 Z" stroke-width="1.3"/><circle cx="994" cy="401" r="5.5"/><path d="M989.5,404 L986.5,408.5 M998.5,404 L1001.5,408.5" stroke-width="1.1"/><path transform="translate(983,431)" d="M6,15 V5 Q6,3 7.5,3 Q9,3 9,5 V11 M9,11 V2.5 Q9,0.5 10.5,0.5 Q12,0.5 12,2.5 V11 M12,11 V3 Q12,1 13.5,1 Q15,1 15,3 V11 M15,11 V6.5 Q15,4.5 16.5,4.5 Q18,4.5 18,6.5 V15 Q18,23 11.5,23 Q7,23 4,19 L0.8,15 Q0,13.5 1.5,13 Q3,12.8 4.5,14.5 L6,16" stroke-width="1.2"/><path d="M983,462 L993,472 M983,462 V467 M983,462 H988 M983,482 L992,473 M983,482 V477 M983,482 H988 M1004,462 L996,470 M1004,462 H999 M1004,462 V467"/><circle cx="998" cy="478" r="4"/><path d="M1001,481 L1006,486"/><path d="M994,500 V525 M991,504 L994,500 L997,504"/><ellipse cx="994" cy="514" rx="9" ry="4"/><rect x="983" y="541" width="6" height="6"/><rect x="991" y="541" width="6" height="6"/><rect x="999" y="541" width="6" height="6"/><rect x="983" y="549" width="22" height="13"/><path d="M990,552 L998,555.5 L990,559Z" fill="#3e4349"/><circle cx="1004" cy="378.5" r="3.2"/><path d="M1002,376.5 L1006,380.5 M1006,376.5 L1002,380.5" stroke-width="0.9"/><circle cx="1004" cy="577" r="3.2"/><path d="M1002,577 H1006" stroke-width="0.9"/></g><g fill="#3e4349"><polygon points="991,420 997,420 994,423"/><polygon points="991,487 997,487 994,490"/><polygon points="991,530 997,530 994,533"/></g></svg><svg class="a" style="left:0px;top:0px;overflow:visible;" width="1" height="1" viewBox="0 0 1 1"><g stroke="#e0e0e0" stroke-width="1.2" fill="none"><path d="M24.5,625 V676.5 H75"/><rect x="20.5" y="672" width="9" height="9"/><path d="M27,608 L32,615 L37,608 M32,615 V621"/><path d="M80,663 L91,674 M91,663 L80,674"/></g></svg><div class="t" style="left:748px;top:652.07px;font-size:20px;color:#7d8086;font-weight:400;font-style:normal;">Activate Windows</div><div class="t" style="left:748px;top:676.80px;font-size:15px;color:#7d8086;font-weight:400;font-style:normal;">Go to Settings to activate Windows.</div><div class="a" style="left:10px;top:691px;width:1004px;height:29px;background:#3b3b3b"></div><svg class="a" style="left:0px;top:0px;overflow:visible;" width="1" height="1" viewBox="0 0 1 1"><defs><linearGradient id="mg" x1="0" y1="0" x2="0" y2="1"><stop offset="0" stop-color="#5a5a5a"/><stop offset="1" stop-color="#7e7e7e"/></linearGradient></defs><path d="M19,691 C24,691 23,708.5 29,708.5 L73,708.5 Q77,708.5 78,704 L80,691 Z" fill="url(#mg)"/><path d="M80,691 C84,691 84,708.5 90,708.5 L138,708.5 Q142,708.5 143,704 L147,691 Z" fill="#555"/><path d="M149,708.5 C152,708.5 153,695 157,692 L172,691 C168,695 167,708.5 160,708.5 Z" fill="#4f4f4f"/><path d="M156,700 H165 M160.5,695.5 V704.5" stroke="#d8d8d8" stroke-width="2"/></svg><div class="t" style="left:33.5px;top:693.64px;font-size:12px;color:#ffffff;font-weight:700;font-style:normal;">Model</div><div class="t" style="left:91.5px;top:693.64px;font-size:12px;color:#cccccc;font-weight:400;font-style:normal;">Layout1</div><div class="a" style="left:423px;top:691px;width:591px;height:28px;background:#474747"></div><div class="a" style="left:424.5px;top:692.5px;width:48.5px;height:25px;border:1px solid #636363;background:#4a4a4a"></div><div class="a" style="left:474px;top:692.5px;width:64.5px;height:25px;border:1px solid #636363;background:#4a4a4a"></div><div class="a" style="left:540px;top:692.5px;width:103px;height:25px;border:1px solid #636363;background:#4a4a4a"></div><div class="a" style="left:644px;top:692.5px;width:63.5px;height:25px;border:1px solid #636363;background:#4a4a4a"></div><div class="a" style="left:709px;top:692.5px;width:107px;height:25px;border:1px solid #636363;background:#4a4a4a"></div><div class="a" style="left:817.5px;top:692.5px;width:40.0px;height:25px;border:1px solid #636363;background:#4a4a4a"></div><div class="a" style="left:858px;top:692.5px;width:25px;height:25px;border:1px solid #636363;background:#4a4a4a"></div><div class="a" style="left:885px;top:692.5px;width:24.5px;height:25px;border:1px solid #636363;background:#4a4a4a"></div><div class="a" style="left:911.5px;top:692.5px;width:25.0px;height:25px;border:1px solid #636363;background:#4a4a4a"></div><div class="a" style="left:938.5px;top:692.5px;width:23.5px;height:25px;border:1px solid #636363;background:#4a4a4a"></div><div class="a" style="left:963.5px;top:692.5px;width:26.0px;height:25px;border:1px solid #636363;background:#4a4a4a"></div><div class="a" style="left:990.5px;top:692.5px;width:22.0px;height:25px;border:1px solid #636363;background:#4a4a4a"></div><div class="t" style="left:429px;top:699.13px;font-size:11.3px;color:#f4f4f4;font-weight:400;font-style:normal;">MODEL</div><svg class="a" style="left:0px;top:0px;overflow:visible;" width="1" height="1" viewBox="0 0 1 1"><g stroke="#d0d0d0" stroke-width="0.8"><path d="M481.5,697 V713"/><path d="M484.1,697 V713"/><path d="M486.7,697 V713"/><path d="M489.3,697 V713"/><path d="M491.9,697 V713"/><path d="M480,700.0 H494" stroke-dasharray="1,1.6"/><path d="M480,703.5 H494" stroke-dasharray="1,1.6"/><path d="M480,707.0 H494" stroke-dasharray="1,1.6"/><path d="M480,710.5 H494" stroke-dasharray="1,1.6"/></g><g fill="#d0d0d0"><rect x="503.0" y="698.0" width="1" height="1"/><rect x="505.6" y="698.0" width="1" height="1"/><rect x="508.2" y="698.0" width="1" height="1"/><rect x="510.8" y="698.0" width="1" height="1"/><rect x="513.4" y="698.0" width="1" height="1"/><rect x="516.0" y="698.0" width="1" height="1"/><rect x="503.0" y="700.6" width="1" height="1"/><rect x="505.6" y="700.6" width="1" height="1"/><rect x="508.2" y="700.6" width="1" height="1"/><rect x="510.8" y="700.6" width="1" height="1"/><rect x="513.4" y="700.6" width="1" height="1"/><rect x="516.0" y="700.6" width="1" height="1"/><rect x="503.0" y="703.2" width="1" height="1"/><rect x="505.6" y="703.2" width="1" height="1"/><rect x="508.2" y="703.2" width="1" height="1"/><rect x="510.8" y="703.2" width="1" height="1"/><rect x="513.4" y="703.2" width="1" height="1"/><rect x="516.0" y="703.2" width="1" height="1"/><rect x="503.0" y="705.8" width="1" height="1"/><rect x="505.6" y="705.8" width="1" height="1"/><rect x="508.2" y="705.8" width="1" height="1"/><rect x="510.8" y="705.8" width="1" height="1"/><rect x="513.4" y="705.8" width="1" height="1"/><rect x="516.0" y="705.8" width="1" height="1"/><rect x="503.0" y="708.4" width="1" height="1"/><rect x="505.6" y="708.4" width="1" height="1"/><rect x="508.2" y="708.4" width="1" height="1"/><rect x="510.8" y="708.4" width="1" height="1"/><rect x="513.4" y="708.4" width="1" height="1"/><rect x="516.0" y="708.4" width="1" height="1"/><rect x="503.0" y="711.0" width="1" height="1"/><rect x="505.6" y="711.0" width="1" height="1"/><rect x="508.2" y="711.0" width="1" height="1"/><rect x="510.8" y="711.0" width="1" height="1"/><rect x="513.4" y="711.0" width="1" height="1"/><rect x="516.0" y="711.0" width="1" height="1"/></g><path d="M548,698 V711 H560 M548,706 H553 V711" fill="none" stroke="#3a8ef2" stroke-width="1.6"/><circle cx="576" cy="705" r="6.5" fill="none" stroke="#d0d0d0" stroke-width="1.3"/><path d="M576,705 L582,699 M576,705 H585" stroke="#d0d0d0" stroke-width="1.2"/><path d="M608,696 L625,713 M616,695 V714" stroke="#c8c8c8" stroke-width="1.3"/><path d="M648,711 H664 M648,711 L661,699" stroke="#3a8ef2" stroke-width="1.8"/><rect x="653" y="704" width="3" height="3" fill="#3a8ef2"/><rect x="674.5" y="698.5" width="13" height="13" fill="none" stroke="#3a8ef2" stroke-width="1.8"/><rect x="672" y="696" width="5" height="5" fill="#1f4a1a" stroke="#285a28"/><rect x="673.5" y="697.5" width="2" height="2" fill="#3af03a"/><path d="M713,713 L719,703 L720,696 L723,703 L731,713 L722,709 Z" fill="#3a8ef2" stroke="#1a3a80" stroke-width="1"/><circle cx="726" cy="700" r="3.6" fill="none" stroke="#3a8ef2" stroke-width="1.6"/><path d="M738,713 L744,703 L745,696 L748,703 L754,713 L746,709 Z" fill="#c4c4c4"/><path d="M750,696 L747.5,701 L751.5,701 L749,706" stroke="#c4c4c4" stroke-width="1.3" fill="none"/><path d="M762,713 L768.5,703 L769.8,695 L771.2,703 L778,713 L770,709 Z" fill="#c4c4c4"/></svg><div class="t" style="left:787px;top:699.07px;font-size:11.5px;color:#f0f0f0;font-weight:700;font-style:normal;letter-spacing:-0.8px">1:1</div><svg class="a" style="left:804.5px;top:703px" width="6" height="3.5"><polygon points="0,0 6,0 3.0,3.5" fill="#f0f0f0"/></svg><svg class="a" style="left:846.5px;top:703px" width="6" height="3.5"><polygon points="0,0 6,0 3.0,3.5" fill="#f0f0f0"/></svg><svg class="a" style="left:527px;top:703px" width="6" height="3.5"><polygon points="0,0 6,0 3.0,3.5" fill="#f0f0f0"/></svg><svg class="a" style="left:593px;top:703px" width="6" height="3.5"><polygon points="0,0 6,0 3.0,3.5" fill="#f0f0f0"/></svg><svg class="a" style="left:632.5px;top:703px" width="6" height="3.5"><polygon points="0,0 6,0 3.0,3.5" fill="#f0f0f0"/></svg><svg class="a" style="left:696px;top:703px" width="6" height="3.5"><polygon points="0,0 6,0 3.0,3.5" fill="#f0f0f0"/></svg><svg class="a" style="left:0px;top:0px;overflow:visible;" width="1" height="1" viewBox="0 0 1 1"><circle cx="830" cy="705" r="5.3" fill="none" stroke="#bdbdbd" stroke-width="2.4" stroke-dasharray="2.2,1.9"/><circle cx="830" cy="705" r="3.6" fill="none" stroke="#bdbdbd" stroke-width="2.6"/><path d="M862.5,705 H876.5 M869.5,698 V712" stroke="#d8d8d8" stroke-width="1.8"/><rect x="889.5" y="697.5" width="6.5" height="6.5" fill="none" stroke="#cfcfcf"/><circle cx="901" cy="704" r="3" fill="none" stroke="#cfcfcf"/><path d="M891.5,712 L894.5,706.5 L897.5,712Z" fill="none" stroke="#cfcfcf"/><circle cx="924" cy="704.7" r="8.6" fill="#1f4a9a" stroke="#3a8ef2" stroke-width="1.6"/><path d="M921,707 L926,702" stroke="#3a8ef2" stroke-width="1"/><rect x="943" y="697" width="14" height="14" fill="#d8d050"/><rect x="943" y="697" width="14" height="7" fill="#5a80d0"/><circle cx="946" cy="699" r="2" fill="#fff"/><path d="M948,709 L951,712 L957,704" fill="none" stroke="#30c030" stroke-width="2"/><rect x="968.5" y="698.5" width="15" height="11" fill="none" stroke="#d0d0d0" stroke-width="1.1"/><path d="M971,707 L975,703 M977,705 L981,701" stroke="#d0d0d0" stroke-width="1.3"/><path d="M992.5,700 H1008 M992.5,705 H1008 M992.5,710 H1008" stroke="#e0e0e0" stroke-width="1.8"/></svg><div class="a" style="left:10px;top:10px;width:41px;height:41px;border:1px solid #151515;background:linear-gradient(#d3d4d4,#8c8d8e);box-shadow:inset 0 0 0 1px #dcdcdc"></div><svg class="a" style="left:10px;top:9px;overflow:visible;" width="42" height="42" viewBox="0 0 42 42"><defs><linearGradient id="ag" x1="0" y1="0" x2="0.3" y2="1"><stop offset="0" stop-color="#c8262c"/><stop offset="0.7" stop-color="#b42228"/><stop offset="1" stop-color="#9a3a30"/></linearGradient></defs><path d="M13,4 L19.3,4 L28.2,30 L21.8,30 L20.6,23.5 L12,23.5 L11.2,30 L5.2,30 Z M16.4,10.5 L13.6,16.2 L19,16.2 Z" fill="url(#ag)" fill-rule="evenodd"/><path d="M5.8,27 L11.4,27 L11.2,30 L5.2,30Z M21.6,27 L27.6,27 L28.2,30 L22,30Z" fill="#c98a5c" opacity="0.6"/><polygon points="30.7,19 38,19 34.35,23.5" fill="#2a2a2a"/></svg><div class="a" style="left:1014px;top:2px;width:1px;height:719px;background:#f4f4f4"></div><div class="a" style="left:1015px;top:40px;width:9px;height:47px;background:#e6e7e8"></div><div class="a" style="left:1015px;top:87px;width:9px;height:637px;background:#d9dadb"></div><div class="a" style="left:1016px;top:249px;width:8px;height:156px;background:#a9aaab"></div><svg class="a" style="left:1015px;top:92px;overflow:visible;" width="6" height="6" viewBox="0 0 6 6"><polygon points="0,0 6,6 0,6" fill="#333"/></svg><div class="a" style="left:0px;top:721px;width:144px;height:3px;background:#1c2024"></div><div class="a" style="left:144px;top:721px;width:21px;height:3px;background:#d6d6d6"></div><div class="a" style="left:165px;top:721px;width:850px;height:3px;background:#f0f0f0"></div><svg class="a" style="left:0px;top:0px;overflow:visible;" width="1" height="1" viewBox="0 0 1 1"><path d="M183,723 H230 M283,723 H300" stroke="#d02020" stroke-width="2" stroke-dasharray="3,1.5"/></svg><svg class="a" style="left:0;top:0" width="9" height="724"><circle cx="10" cy="100" r="4.5" fill="none" stroke="#3a5ad0" stroke-width="1"/><circle cx="10" cy="257.5" r="3.5" fill="#8a8a8a"/><circle cx="10" cy="307.5" r="3.5" fill="#8a8a8a"/><path d="M4,393.5 H9 M4,398.5 H9 M4,403.5 H9" stroke="#9a9a9a" stroke-width="1.2"/></svg></body></html>
